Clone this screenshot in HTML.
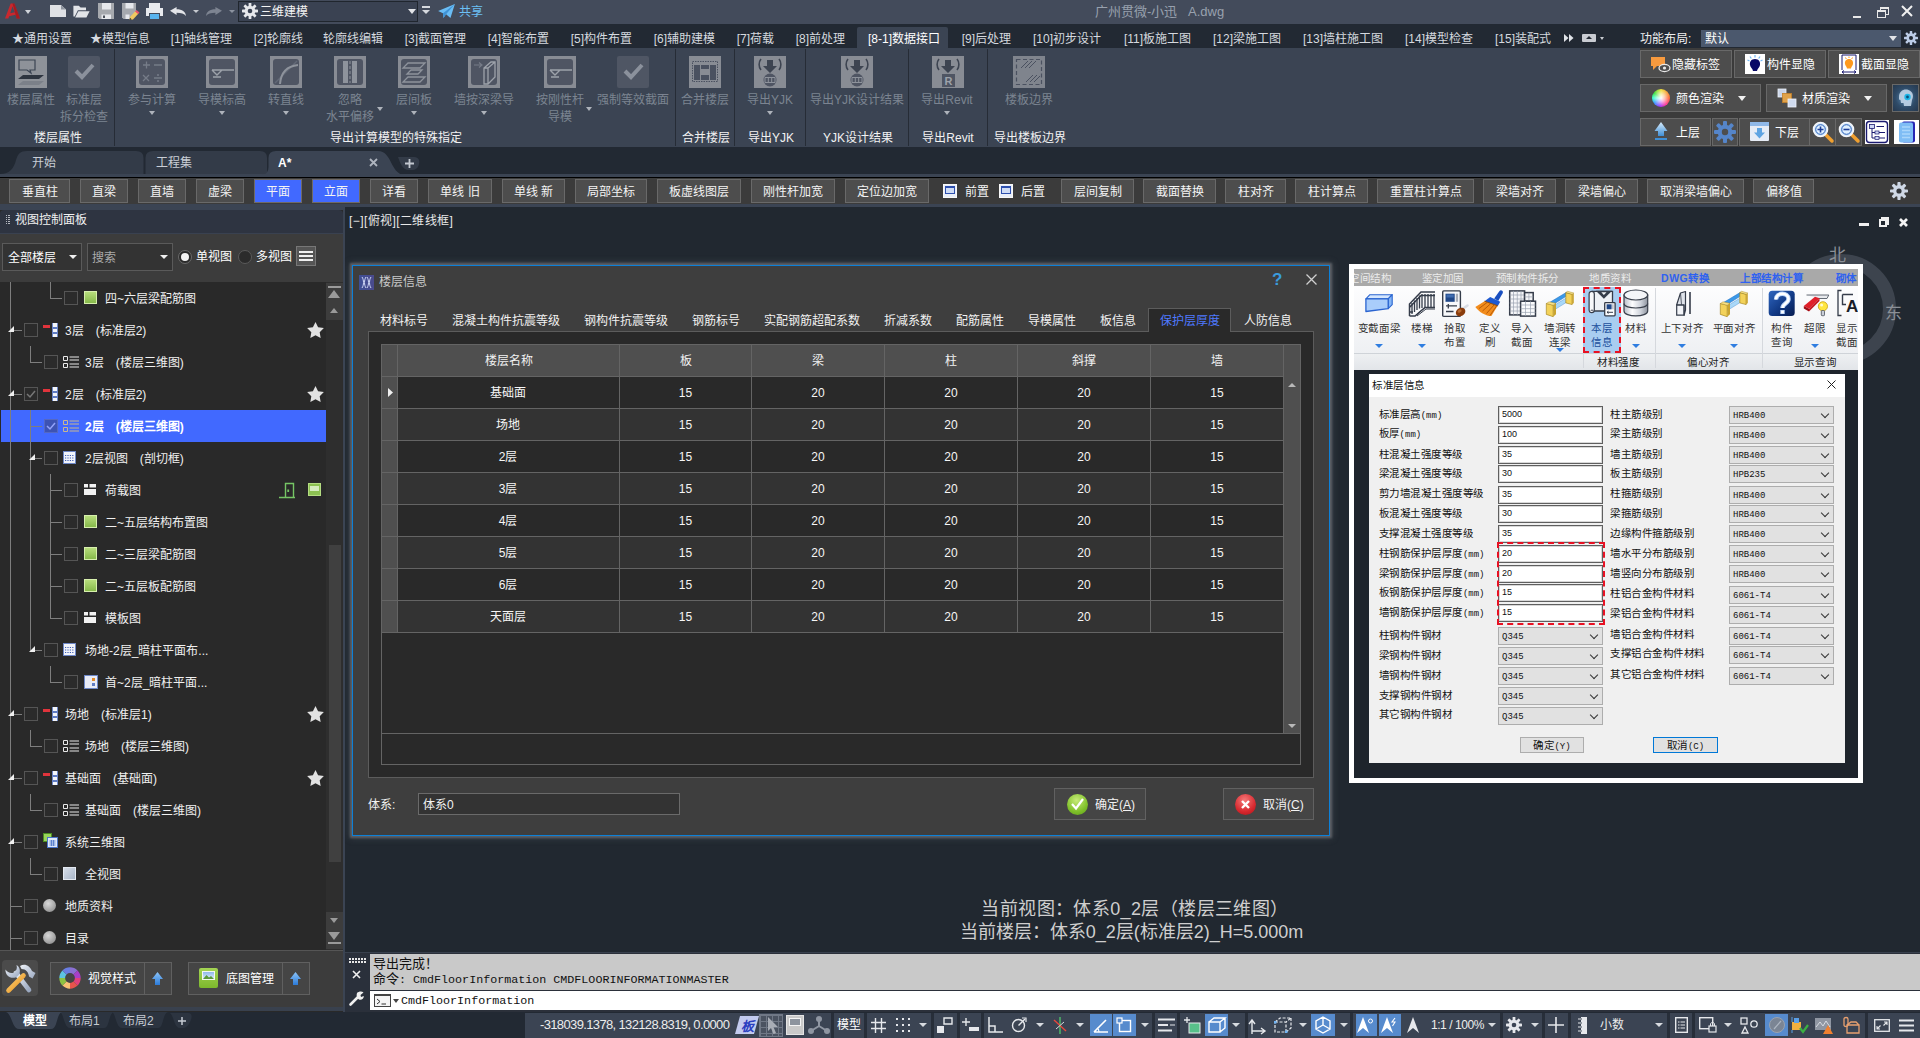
<!DOCTYPE html>
<html lang="zh-CN">
<head>
<meta charset="utf-8">
<title>楼层信息</title>
<style>
*{box-sizing:border-box;margin:0;padding:0}
html,body{width:1920px;height:1038px;overflow:hidden;background:#212830}
body{font-family:"Liberation Sans",sans-serif;font-size:12px;color:#e6e6e6;position:relative;line-height:1}
.abs{position:absolute}
.t{position:absolute;white-space:nowrap;line-height:16px;height:16px}
.c{transform:translateX(-50%)}
svg{position:absolute;overflow:visible}
/* title bar */
#title{position:absolute;left:0;top:0;width:1920px;height:24px;background:#434b5b}
#tabs{position:absolute;left:0;top:24px;width:1920px;height:26px;background:#222933}
#tabs .t{top:7px;font-size:12px;color:#d5d9df}
#ribbon{position:absolute;left:0;top:50px;width:1920px;height:97px;background:#3b4453}
#ribbon .ic{position:absolute;top:6px;width:32px;height:32px;background:#888c94}
#ribbon .lb{position:absolute;top:42px;font-size:12px;color:#7c8491;white-space:nowrap;line-height:17px;text-align:center;transform:translateX(-50%)}
#ribbon .pl{position:absolute;top:80px;margin-left:1px;font-size:12px;color:#f2f2f2;white-space:nowrap;line-height:16px;transform:translateX(-50%)}
#ribbon .sep{position:absolute;top:-1px;width:1px;height:97px;background:#262c36}
#ribbon .dd{position:absolute;width:0;height:0;border:3px solid transparent;border-top:4px solid #aeb3bb;border-bottom:0}
.rb{position:absolute;background:#4d4d4d;border:1px solid #686868;color:#f0f0f0;font-size:12px}
#doctabs{position:absolute;left:0;top:147px;width:1920px;height:31px;background:#222933}
#toolbar{position:absolute;left:0;top:178px;width:1920px;height:30px;background:#3b3b3b}
#toolbar .b{position:absolute;top:1px;height:24px;background:#4d4d4d;border:1px solid #696969;margin-left:-1px;box-sizing:content-box;height:21px;padding-top:1px;color:#f4f4f4;font-size:12px;text-align:center;line-height:23px;white-space:nowrap}
#toolbar .b.on{background:#4169ff;border-color:#6f6a66}
#left{position:absolute;left:0;top:208px;width:344px;height:804px;background:#292929}
#tree .r{position:absolute;left:0;width:326px;height:32px}
#tree .cb{position:absolute;top:9px;width:14px;height:14px;border:1px solid #555;background:#2b2b2b}
#tree .tx{position:absolute;top:9px;font-size:12px;color:#f0f0f0;white-space:nowrap;line-height:16px}
#tree .ln{position:absolute;background:#7e7e7e}
#dlg{position:absolute;left:352px;top:265px;width:978px;height:571px;background:#3e3e3e;border:1px solid #0c80d8;box-shadow:0 0 2px 2px rgba(100,103,108,.82),0 0 7px 2px rgba(108,114,122,.4)}
#dlg .tab{position:absolute;top:48px;font-size:12px;color:#f0f0f0;white-space:nowrap;line-height:16px}
#grid td{border-right:1px solid #5a5a5a;border-bottom:1px solid #5a5a5a;text-align:center;font-size:12px;color:#f4f4f4;height:32px;padding:0}
#img{position:absolute;left:1349px;top:264px;width:514px;height:519px;background:#fff;border-radius:3px}
#img .fl{position:absolute;left:9px;font-size:10px;color:#111;white-space:nowrap;line-height:14px}
#img .fr{position:absolute;left:241px;font-size:10px;color:#111;white-space:nowrap;line-height:14px}
#img .in{position:absolute;left:149px;width:105px;height:18px;background:#fff;border:1px solid #5f5f5f;box-shadow:inset 0 0 0 1px #d8d8d8;font-size:9px;color:#111;line-height:15px;padding-left:3px}
#img .se{position:absolute;width:105px;height:18px;background:#e1e1e1;border:1px solid #adadad;font-size:9px;color:#111;line-height:18px;padding-left:3px;font-family:"Liberation Mono",monospace}
#img .se:after{content:"";position:absolute;right:5px;top:4px;width:5px;height:5px;border-right:1px solid #333;border-bottom:1px solid #333;transform:rotate(45deg)}
#cmd{position:absolute;left:345px;top:953px;width:1575px;height:59px;background:#2b303a}
#status{position:absolute;left:0;top:1012px;width:1920px;height:26px;background:#222933}
</style>
</head>
<body>
<div id="title">
  <!-- A logo -->
  <svg style="left:5px;top:3px" width="15" height="16" viewBox="0 0 20 20"><path d="M0 20 L7.500 0 L12.500 0 L20 20 L15.500 20 L14 15 L5.500 17 L4.500 20 Z M7 13 L13 11.800 L10 3.500 Z" fill="#c9282e"/><path d="M10 0 H12.500 L20 20 H15.500 Z" fill="#8e1218" opacity=".6"/></svg>
  <div class="abs" style="left:25px;top:10px;border:3.5px solid transparent;border-top:4px solid #d0d4da;border-bottom:0"></div>
  <!-- new -->
  <svg style="left:50px;top:5px" width="16" height="12" viewBox="0 0 16 12"><path d="M0 0 H11 L16 4.500 V12 H0 Z" fill="#dfe1e5"/><path d="M11 0 V4.500 H16 Z" fill="#8f959f"/></svg>
  <!-- open -->
  <svg style="left:73px;top:4px" width="17" height="13.500" viewBox="0 0 18 15"><path d="M0 2 H6 L8 4 H14 V7 H5 L1.5 14 H0 Z" fill="#e2e4e8"/><path d="M5.5 8 H18 L14.5 15 H2 Z" fill="#e2e4e8"/></svg>
  <!-- save -->
  <svg style="left:98px;top:3px" width="16" height="16" viewBox="0 0 16 16"><path d="M0 0 H16 V16 H1.500 L0 14.500 Z" fill="#a6a9ae"/><rect x="4" y="0" width="9" height="6.500" fill="#e6e8ec"/><rect x="3.500" y="11.500" width="9.500" height="4.500" fill="#e6e8ec"/><rect x="5" y="12.500" width="2" height="2.500" fill="#4a505a"/></svg>
  <!-- save as -->
  <svg style="left:122px;top:3px" width="17" height="16" viewBox="0 0 17 16"><path d="M0 0 H14 V9 L8 16 H1.500 L0 14.500 Z" fill="#a6a9ae"/><rect x="3.500" y="0" width="8" height="5.500" fill="#e6e8ec"/><rect x="3.500" y="11.500" width="4" height="4.500" fill="#e6e8ec"/><path d="M8 14 L13.500 8 L16.500 10.500 L11 16.500 L7.500 17 Z" fill="#f0c860"/><path d="M13 8.500 L14.500 7 L17.500 9.500 L16 11 Z" fill="#e8506a"/><path d="M7.500 17 L8 14.800 L9.800 16.500 Z" fill="#333"/></svg>
  <!-- print -->
  <svg style="left:146px;top:3px" width="17" height="17" viewBox="0 0 17 17"><rect x="3" y="0" width="11" height="5" fill="#e8eaee"/><rect x="0" y="5" width="17" height="8" fill="#e8eaee"/><rect x="3" y="10" width="11" height="7" fill="#434b5b"/><rect x="4" y="11" width="9" height="5" fill="#59b4ef"/></svg>
  <!-- undo -->
  <svg style="left:170px;top:7px" width="16" height="9" viewBox="0 0 17 12" preserveAspectRatio="none"><path d="M0 5 L7 0 V3 C13 3 16.5 6 17 12 C15 8.5 12 7.5 7 7.5 V10.5 Z" fill="#e2e4e8"/></svg>
  <div class="abs" style="left:193px;top:10px;border:3px solid transparent;border-top:3.5px solid #c5c9cf;border-bottom:0"></div>
  <!-- redo -->
  <svg style="left:206px;top:7px" width="16" height="9" viewBox="0 0 17 12" preserveAspectRatio="none"><path d="M17 5 L10 0 V3 C4 3 .5 6 0 12 C2 8.5 5 7.5 10 7.5 V10.5 Z" fill="#7d8491"/></svg>
  <div class="abs" style="left:229px;top:10px;border:3px solid transparent;border-top:3.5px solid #8c93a0;border-bottom:0"></div>
  <!-- workspace dropdown -->
  <div class="abs" style="left:238px;top:1px;width:180px;height:21px;background:#3a4252;border:1px solid #20262e"></div>
  <svg style="left:242px;top:3px" width="16" height="16" viewBox="0 0 16 16"><g fill="#e6e8ec"><circle cx="8" cy="8" r="5.3"/><g id="gt"><rect x="6.6" y="0" width="2.8" height="16" rx=".6"/></g><rect x="6.6" y="0" width="2.8" height="16" rx=".6" transform="rotate(45 8 8)"/><rect x="6.6" y="0" width="2.8" height="16" rx=".6" transform="rotate(90 8 8)"/><rect x="6.6" y="0" width="2.8" height="16" rx=".6" transform="rotate(135 8 8)"/></g><circle cx="8" cy="8" r="2.3" fill="#3a4252"/></svg>
  <div class="t" style="left:260px;top:4px;font-size:12px;color:#f4f4f4">三维建模</div>
  <div class="abs" style="left:408px;top:9px;border:4px solid transparent;border-top:5px solid #e2e4e8;border-bottom:0"></div>
  <div class="abs" style="left:422px;top:6px;width:8px;height:2px;background:#d6d9de"></div>
  <div class="abs" style="left:422px;top:10px;border:4px solid transparent;border-top:4px solid #d6d9de;border-bottom:0"></div>
  <!-- share -->
  <svg style="left:438px;top:4px" width="17" height="15" viewBox="0 0 19 17"><path d="M0 8 L19 0 L14 16 L9 11.5 L6 16 L5.5 10.5 Z" fill="#6abdf5"/><path d="M5.5 10.5 L19 0 L9 11.5 L6 16 Z" fill="#3f93d6"/></svg>
  <div class="t" style="left:459px;top:4px;font-size:12px;color:#6cc0f5">共享</div>
  <div class="t" style="left:1095px;top:4px;font-size:13px;color:#98a1ae">广州贯微-小迅</div>
  <div class="t" style="left:1188px;top:4px;font-size:13px;color:#98a1ae">A.dwg</div>
  <!-- window controls -->
  <div class="abs" style="left:1853px;top:16px;width:8px;height:2px;background:#e8e8e8"></div>
  <div class="abs" style="left:1880px;top:7px;width:9px;height:8px;border:1.5px solid #e8e8e8;border-top-width:2px"></div>
  <div class="abs" style="left:1877px;top:10px;width:9px;height:8px;border:1.5px solid #e8e8e8;border-top-width:2px;background:#434b5b"></div>
  <svg style="left:1901px;top:5px" width="12" height="12" viewBox="0 0 12 12"><path d="M1 1 L11 11 M11 1 L1 11" stroke="#f0f0f0" stroke-width="2"/></svg>
</div>
<div id="tabs">
  <div class="abs" style="left:0;top:24px;width:1920px;height:2px;background:#3b4453"></div>
  <div class="abs" style="left:857px;top:3px;width:91px;height:23px;background:#3b4453;border-radius:2px 2px 0 0"></div>
  <div class="t" style="left:12px">★通用设置</div>
  <div class="t" style="left:90px">★模型信息</div>
  <div class="t" style="right:1688px">[1]轴线管理</div>
  <div class="t" style="right:1617px">[2]轮廓线</div>
  <div class="t" style="left:323px">轮廓线编辑</div>
  <div class="t" style="right:1454px">[3]截面管理</div>
  <div class="t" style="right:1371px">[4]智能布置</div>
  <div class="t" style="right:1288px">[5]构件布置</div>
  <div class="t" style="right:1205px">[6]辅助建模</div>
  <div class="t" style="right:1146px">[7]荷载</div>
  <div class="t" style="right:1075px">[8]前处理</div>
  <div class="t" style="right:980px;color:#fff">[8-1]数据接口</div>
  <div class="t" style="right:909px">[9]后处理</div>
  <div class="t" style="right:819px">[10]初步设计</div>
  <div class="t" style="right:729px">[11]板施工图</div>
  <div class="t" style="right:639px">[12]梁施工图</div>
  <div class="t" style="right:537px">[13]墙柱施工图</div>
  <div class="t" style="right:447px">[14]模型检查</div>
  <div class="t" style="right:369px">[15]装配式</div>
  <svg style="left:1564px;top:10px" width="10" height="8" viewBox="0 0 10 8"><path d="M0 0 L4.5 4 L0 8 Z M5 0 L9.5 4 L5 8 Z" fill="#e0e3e8"/></svg>
  <div class="abs" style="left:1582px;top:10px;width:14px;height:8px;background:#c9ccd2;border-radius:1px"></div>
  <div class="abs" style="left:1586px;top:12px;border:3px solid transparent;border-bottom:3.5px solid #222933;border-top:0"></div>
  <div class="abs" style="left:1600px;top:13px;border:2.5px solid transparent;border-top:3px solid #c9ccd2;border-bottom:0"></div>
  <div class="t" style="left:1640px;color:#eee">功能布局:</div>
  <div class="abs" style="left:1701px;top:6px;width:200px;height:17px;background:#4b586d"></div>
  <div class="t" style="left:1705px;top:7px;color:#fff">默认</div>
  <div class="abs" style="left:1889px;top:12px;border:4px solid transparent;border-top:5px solid #e2e4e8;border-bottom:0"></div>
  <svg style="left:1904px;top:7px" width="14" height="14" viewBox="0 0 16 16"><g fill="#bccce6"><circle cx="8" cy="8" r="5.3"/><rect x="6.6" y="0" width="2.8" height="16" rx=".6"/><rect x="6.6" y="0" width="2.8" height="16" rx=".6" transform="rotate(45 8 8)"/><rect x="6.6" y="0" width="2.8" height="16" rx=".6" transform="rotate(90 8 8)"/><rect x="6.6" y="0" width="2.8" height="16" rx=".6" transform="rotate(135 8 8)"/></g><circle cx="8" cy="8" r="2.3" fill="#222933"/></svg>
</div>
<div id="ribbon">
  
  <!-- separators -->
  <div class="sep" style="left:114px"></div><div class="sep" style="left:675px"></div><div class="sep" style="left:734px"></div><div class="sep" style="left:805px"></div><div class="sep" style="left:908px"></div><div class="sep" style="left:987px"></div>
  <!-- 1 楼层属性 -->
  <div class="ic" style="left:15px;background:#8e9299"><svg width="32" height="32" viewBox="0 0 32 32" style="left:0;top:0"><path d="M4 4 H20 V14 H15 L16 17 L12 14 H4 Z" fill="none" stroke="#3b4453" stroke-width="1.2"/><path d="M8 19 H29 L24 23 H3 Z" fill="#2e3540"/><path d="M8 25 H29 L24 29 H3 Z" fill="#7b8089"/></svg></div>
  <div class="lb" style="left:31px">楼层属性</div>
  <!-- 2 标准层拆分检查 -->
  <div class="ic" style="left:68px;background:#4f5664;border-radius:2px"><svg width="32" height="32" viewBox="0 0 32 32" style="left:0;top:0"><path d="M8 15 L14 21 L25 9" fill="none" stroke="#8b919c" stroke-width="4"/></svg></div>
  <div class="lb" style="left:84px">标准层<br>拆分检查</div>
  <!-- 3 参与计算 -->
  <div class="ic" style="left:136px"><svg width="32" height="32" viewBox="0 0 32 32" style="left:0;top:0"><rect x="3" y="3" width="26" height="26" rx="3" fill="#4f5563"/><path d="M7 9 H14 M10.5 5.5 V12.5 M18 9 H26 M7 19 L13 25 M13 19 L7 25 M18 22 H26" stroke="#767c88" stroke-width="1.3" fill="none"/><circle cx="22" cy="19" r="1" fill="#767c88"/><circle cx="22" cy="25" r="1" fill="#767c88"/></svg></div>
  <div class="lb" style="left:152px">参与计算</div><div class="dd" style="left:149px;top:61px"></div>
  <!-- 4 导模标高 -->
  <div class="ic" style="left:206px"><svg width="32" height="32" viewBox="0 0 32 32" style="left:0;top:0"><rect x="3" y="3" width="26" height="26" rx="3" fill="#4f5563"/><path d="M6 14 H28 M6 14 L11 19 L16 14 M7 21 H15" stroke="#9da2aa" stroke-width="1.4" fill="none"/></svg></div>
  <div class="lb" style="left:222px">导模标高</div><div class="dd" style="left:219px;top:61px"></div>
  <!-- 5 转直线 -->
  <div class="ic" style="left:270px"><svg width="32" height="32" viewBox="0 0 32 32" style="left:0;top:0"><rect x="3" y="3" width="26" height="26" rx="3" fill="#4f5563"/><path d="M5 27 L27 5" stroke="#626977" stroke-width="1.5"/><path d="M10 28 C11 16 18 10 28 9" stroke="#8e939c" stroke-width="2" fill="none"/></svg></div>
  <div class="lb" style="left:286px">转直线</div><div class="dd" style="left:283px;top:61px"></div>
  <!-- 6 忽略水平偏移 -->
  <div class="ic" style="left:334px"><svg width="32" height="32" viewBox="0 0 32 32" style="left:0;top:0"><rect x="3" y="3" width="26" height="26" rx="3" fill="#4f5563"/><rect x="9" y="5" width="5" height="22" fill="#8e939c"/><rect x="18" y="5" width="5" height="22" fill="#8e939c"/><path d="M16 5 V27" stroke="#8e939c" stroke-width="1" stroke-dasharray="3 2"/></svg></div>
  <div class="lb" style="left:350px">忽略<br>水平偏移</div><div class="dd" style="left:377px;top:57px"></div>
  <!-- 7 层间板 -->
  <div class="ic" style="left:398px"><svg width="32" height="32" viewBox="0 0 32 32" style="left:0;top:0"><rect x="3" y="3" width="26" height="26" rx="3" fill="#4f5563"/><path d="M10 7 H27 L22 12 H5 Z M13 14 H24 L20 18 H9 Z M10 21 H27 L22 26 H5 Z" fill="none" stroke="#8e939c" stroke-width="1.3"/></svg></div>
  <div class="lb" style="left:414px">层间板</div><div class="dd" style="left:411px;top:61px"></div>
  <!-- 8 墙按深梁导 -->
  <div class="ic" style="left:468px"><svg width="32" height="32" viewBox="0 0 32 32" style="left:0;top:0"><rect x="3" y="3" width="26" height="26" rx="3" fill="#4f5563"/><path d="M6 9 H14 M11 6.5 L14 9 L11 11.5" stroke="#767c88" stroke-width="1.2" fill="none"/><path d="M16 12 L23 6 H27 V21 L20 28 H16 Z M20 12 V28 M20 12 L27 6 M16 12 H20" fill="none" stroke="#9da2aa" stroke-width="1.3"/></svg></div>
  <div class="lb" style="left:484px">墙按深梁导</div><div class="dd" style="left:481px;top:61px"></div>
  <!-- 9 按刚性杆导模 -->
  <div class="ic" style="left:544px"><svg width="32" height="32" viewBox="0 0 32 32" style="left:0;top:0"><rect x="3" y="3" width="26" height="26" rx="3" fill="#4f5563"/><path d="M6 14 H28 M6 14 L11 19 L16 14 M7 21 H15" stroke="#9da2aa" stroke-width="1.4" fill="none"/></svg></div>
  <div class="lb" style="left:560px">按刚性杆<br>导模</div><div class="dd" style="left:586px;top:57px"></div>
  <!-- 10 强制等效截面 -->
  <div class="ic" style="left:617px;background:#4f5664;border-radius:2px"><svg width="32" height="32" viewBox="0 0 32 32" style="left:0;top:0"><path d="M8 15 L14 21 L25 9" fill="none" stroke="#8b919c" stroke-width="4"/></svg></div>
  <div class="lb" style="left:633px">强制等效截面</div>
  <!-- 11 合并楼层 -->
  <div class="ic" style="left:689px"><svg width="32" height="32" viewBox="0 0 32 32" style="left:0;top:0"><rect x="3.5" y="5.5" width="25" height="20" fill="none" stroke="#4a5160" stroke-width="1" stroke-dasharray="1.5 1"/><rect x="5" y="9" width="6" height="15" fill="#4a5160"/><rect x="12" y="9" width="8" height="4" fill="#4a5160"/><rect x="12" y="19" width="8" height="5" fill="#4a5160"/><rect x="21" y="9" width="6" height="15" fill="#4a5160"/></svg></div>
  <div class="lb" style="left:705px">合并楼层</div>
  <!-- 12 导出YJK -->
  <div class="ic" style="left:754px"><svg width="32" height="32" viewBox="0 0 32 32" style="left:0;top:0"><path d="M7 3 C4.5 6 4.5 11 7 14 M25 3 C27.5 6 27.5 11 25 14" fill="none" stroke="#3d4451" stroke-width="1.6"/><path d="M13 4 H19 V10 H23 L16 17 L9 10 H13 Z" fill="#3d4451"/><circle cx="16" cy="24" r="6.5" fill="#4f5563"/><path d="M11 21.5 H21 V26.5 H11 Z M14.3 21.5 V26.5 M17.7 21.5 V26.5" fill="none" stroke="#8e939c" stroke-width="1"/></svg></div>
  <div class="lb" style="left:770px">导出YJK</div><div class="dd" style="left:767px;top:61px"></div>
  <!-- 13 导出YJK设计结果 -->
  <div class="ic" style="left:841px"><svg width="32" height="32" viewBox="0 0 32 32" style="left:0;top:0"><path d="M7 3 C4.5 6 4.5 11 7 14 M25 3 C27.5 6 27.5 11 25 14" fill="none" stroke="#3d4451" stroke-width="1.6"/><path d="M13 4 H19 V10 H23 L16 17 L9 10 H13 Z" fill="#3d4451"/><circle cx="16" cy="24" r="6.5" fill="#4f5563"/><path d="M11 21.5 H21 V26.5 H11 Z M14.3 21.5 V26.5 M17.7 21.5 V26.5" fill="none" stroke="#8e939c" stroke-width="1"/></svg></div>
  <div class="lb" style="left:857px">导出YJK设计结果</div>
  <!-- 14 导出Revit -->
  <div class="ic" style="left:932px"><svg width="32" height="32" viewBox="0 0 32 32" style="left:0;top:0"><path d="M7 3 C4.5 6 4.5 11 7 14 M25 3 C27.5 6 27.5 11 25 14" fill="none" stroke="#3d4451" stroke-width="1.6"/><path d="M13 4 H19 V10 H23 L16 17 L9 10 H13 Z" fill="#3d4451"/><rect x="10" y="18" width="13" height="13" fill="#4f5563"/><text x="16.5" y="29" font-family="Liberation Sans" font-size="11" font-weight="bold" text-anchor="middle" fill="#9da2aa">R</text></svg></div>
  <div class="lb" style="left:947px">导出Revit</div><div class="dd" style="left:944px;top:61px"></div>
  <!-- 15 楼板边界 -->
  <div class="ic" style="left:1013px;background:#7f848d"><svg width="32" height="32" viewBox="0 0 32 32" style="left:0;top:0"><rect x="3.5" y="3.5" width="25" height="25" fill="none" stroke="#4a5160" stroke-width="1.2" stroke-dasharray="4 2.5"/><path d="M8 12 L15 5 M12 12 L19 5 M16 12 L23 5 M13 26 L20 19 M17 26 L24 19 M21 26 L27 20" stroke="#4a5160" stroke-width="1"/></svg></div>
  <div class="lb" style="left:1029px">楼板边界</div>
  <!-- panel labels -->
  <div class="pl" style="left:57px">楼层属性</div>
  <div class="pl" style="left:395px">导出计算模型的特殊指定</div>
  <div class="pl" style="left:705px">合并楼层</div>
  <div class="pl" style="left:770px">导出YJK</div>
  <div class="pl" style="left:857px">YJK设计结果</div>
  <div class="pl" style="left:947px">导出Revit</div>
  <div class="pl" style="left:1029px">导出楼板边界</div>
</div>
<div class="abs" style="left:1640px;top:48px;width:280px;height:99px;background:#3b3b3b"></div>
<!-- row1 -->
<div class="rb" style="left:1640px;top:50px;width:92px;height:28px"></div>
<svg style="left:1651px;top:57px" width="20" height="16" viewBox="0 0 20 16"><path d="M0 0 H14 V9 H6 L2 13 V9 H0 Z" fill="#f79a3e"/><ellipse cx="13.5" cy="11" rx="5.5" ry="3.6" fill="#4d4d4d" stroke="#e8e8e8" stroke-width="1.3"/><circle cx="13.5" cy="11" r="1.6" fill="#e8e8e8"/></svg>
<div class="t" style="left:1672px;top:57px;color:#fff">隐藏标签</div>
<div class="rb" style="left:1734px;top:50px;width:92px;height:28px"></div>
<div class="abs" style="left:1745px;top:54px;width:20px;height:20px;background:#fff"></div>
<svg style="left:1745px;top:54px" width="20" height="20" viewBox="0 0 20 20"><path d="M10 5 C14 5 15.5 8 15 11 C14.5 13.5 12.5 14.5 12 17 H8 C7.5 14.5 5.500 13.5 5 11 C4.500 8 6 5 10 5 Z" fill="#0a0a66"/><path d="M10 1 V3.500 M5 2.500 L6.300 4.500 M15 2.500 L13.700 4.500 M2.500 6 L4.500 7 M17.500 6 L15.500 7" stroke="#6fb7f5" stroke-width="1.2"/></svg>
<div class="t" style="left:1767px;top:57px;color:#fff">构件显隐</div>
<div class="rb" style="left:1828px;top:50px;width:92px;height:28px"></div>
<div class="abs" style="left:1839px;top:54px;width:20px;height:20px;background:#fff"></div>
<svg style="left:1839px;top:54px" width="20" height="20" viewBox="0 0 20 20"><path d="M3 1 H17 V16 M3 1 V16" fill="none" stroke="#1a1a70" stroke-width="1"/><path d="M10 5 C13 5 14.5 7.500 14 10 C13.600 12 12.300 12.500 12 14.500 H8 C7.700 12.500 6.400 12 6 10 C5.500 7.500 7 5 10 5 Z" fill="#ff9a1e"/><path d="M10 2.500 V4 M6.500 3.500 L7.300 5 M13.500 3.500 L12.700 5" stroke="#ff9a1e" stroke-width="1"/><path d="M3 18 H17 M3 18 L5 16.500 M3 18 L5 19.500 M17 18 L15 16.500 M17 18 L15 19.500" stroke="#1a1a70" stroke-width="1" fill="none"/></svg>
<div class="t" style="left:1861px;top:57px;color:#fff">截面显隐</div>
<!-- row2 -->
<div class="rb" style="left:1640px;top:84px;width:121px;height:28px"></div>
<div class="abs" style="left:1652px;top:89px;width:18px;height:18px;border-radius:50%;background:radial-gradient(circle at 50% 50%,#fff 0,rgba(255,255,255,.6) 30%,rgba(255,255,255,0) 65%),conic-gradient(#f0e040,#ff6a3b 25%,#ff3b9a 40%,#a03bff 52%,#3b9bff 65%,#3bffd0 75%,#40e040 85%,#f0e040)"></div>
<div class="t" style="left:1676px;top:91px;color:#fff">颜色渲染</div>
<div class="abs" style="left:1738px;top:96px;border:4px solid transparent;border-top:5px solid #f0f0f0;border-bottom:0"></div>
<div class="rb" style="left:1766px;top:84px;width:121px;height:28px"></div>
<svg style="left:1778px;top:89px" width="18" height="18" viewBox="0 0 18 18"><rect x="0" y="0" width="8" height="8" fill="#c9d4e8" stroke="#eef2fa" stroke-width=".8"/><rect x="4.500" y="4.500" width="9" height="9" fill="#e0a24a" stroke="#c4812a" stroke-width=".8"/><rect x="10" y="10" width="8" height="8" fill="#d0dbee" stroke="#eef2fa" stroke-width=".8"/></svg>
<div class="t" style="left:1802px;top:91px;color:#fff">材质渲染</div>
<div class="abs" style="left:1864px;top:96px;border:4px solid transparent;border-top:5px solid #f0f0f0;border-bottom:0"></div>
<div class="rb" style="left:1892px;top:84px;width:27px;height:28px;background:radial-gradient(circle at 50% 50%,#5d8eb5 0,#2f4b68 55%,#25384e 100%)"></div>
<svg style="left:1895px;top:87px" width="22" height="22" viewBox="0 0 22 22"><path d="M4 10 C4 4 9 1.500 13.500 3 C18 4.500 19 9 17 13 L16 19 H9 L8.500 16 H6 L5.500 13 L4 12.500 Z" fill="#c9dcee" opacity=".85"/><circle cx="12.500" cy="10" r="3.200" fill="#1fb6e8"/><circle cx="12.500" cy="10" r="1.400" fill="#0b4f7a"/></svg>
<!-- row3 -->
<div class="rb" style="left:1640px;top:118px;width:71px;height:28px"></div>
<svg style="left:1654px;top:122px" width="14" height="19" viewBox="0 0 14 19"><defs><linearGradient id="ga" x1="0" y1="0" x2="0" y2="1"><stop offset="0" stop-color="#d8ecfb"/><stop offset="1" stop-color="#3f8fd6"/></linearGradient></defs><path d="M7 0 L13.500 9 H10 V14 H4 V9 H.5 Z" fill="url(#ga)"/><rect x="1" y="16" width="12" height="2" fill="#3f8fd6"/></svg>
<div class="t" style="left:1676px;top:125px;color:#fff">上层</div>
<div class="rb" style="left:1712px;top:118px;width:26px;height:28px"></div>
<svg style="left:1714px;top:121px" width="22" height="22" viewBox="0 0 22 22"><g fill="#5585c9"><circle cx="11" cy="11" r="7.300"/><rect x="9" y="0" width="4" height="22" rx="1"/><rect x="9" y="0" width="4" height="22" rx="1" transform="rotate(45 11 11)"/><rect x="9" y="0" width="4" height="22" rx="1" transform="rotate(90 11 11)"/><rect x="9" y="0" width="4" height="22" rx="1" transform="rotate(135 11 11)"/></g><circle cx="11" cy="11" r="3.200" fill="#4d4d4d"/></svg>
<div class="rb" style="left:1739px;top:118px;width:71px;height:28px"></div>
<svg style="left:1750px;top:122px" width="19" height="19" viewBox="0 0 19 19"><rect x="0" y="0" width="19" height="19" rx="1" fill="#e6ecf6"/><rect x="0" y="0" width="19" height="4" fill="#8fb8e8"/><path d="M7 6 H12 V10.500 H15 L9.500 16.500 L4 10.500 H7 Z" fill="#5fa4e2"/></svg>
<div class="t" style="left:1775px;top:125px;color:#fff">下层</div>
<div class="rb" style="left:1809px;top:118px;width:27px;height:28px"></div>
<svg style="left:1812px;top:121px" width="23" height="23" viewBox="0 0 23 23"><path d="M13 13 L20 20" stroke="#f0a030" stroke-width="3.500" stroke-linecap="round"/><circle cx="8.500" cy="8.500" r="7" fill="#cfe6fa" stroke="#f4f6fa" stroke-width="1.600"/><circle cx="8.500" cy="8.500" r="4.800" fill="#dff0ff" stroke="#2a5fb8" stroke-width="1"/><path d="M5.500 8.500 H11.500 M8.500 5.500 V11.500" stroke="#1d3f9a" stroke-width="1.600"/></svg>
<div class="rb" style="left:1835px;top:118px;width:27px;height:28px"></div>
<svg style="left:1838px;top:121px" width="23" height="23" viewBox="0 0 23 23"><path d="M13 13 L20 20" stroke="#f0a030" stroke-width="3.500" stroke-linecap="round"/><circle cx="8.500" cy="8.500" r="7" fill="#cfe6fa" stroke="#f4f6fa" stroke-width="1.600"/><circle cx="8.500" cy="8.500" r="4.800" fill="#dff0ff" stroke="#2a5fb8" stroke-width="1"/><path d="M5.500 8.500 H11.500" stroke="#1d3f9a" stroke-width="1.600"/></svg>
<div class="abs" style="left:1865px;top:120px;width:24px;height:24px;background:#fff"></div>
<svg style="left:1865px;top:120px" width="24" height="24" viewBox="0 0 24 24"><rect x="1.500" y="1.500" width="21" height="21" rx="3" fill="#fff" stroke="#1a1a70" stroke-width="1.400"/><rect x="4.500" y="4.500" width="5" height="4" fill="#cfd8f5" stroke="#1a1a70" stroke-width=".8"/><path d="M11.500 6.500 H19 M7 8.500 V18 M7 12.500 H10 M7 18 H10 M14 12.500 H20 M14 18 H20" stroke="#1a1a70" stroke-width="1" fill="none"/><rect x="10" y="11" width="4" height="3" fill="#cfd8f5" stroke="#1a1a70" stroke-width=".7"/><rect x="10" y="16.500" width="4" height="3" fill="#cfd8f5" stroke="#1a1a70" stroke-width=".7"/></svg>
<div class="abs" style="left:1894px;top:120px;width:25px;height:24px;background:#fff"></div>
<svg style="left:1894px;top:120px" width="25" height="24" viewBox="0 0 25 24"><rect x="8" y="1.500" width="13" height="21" rx="2" fill="#2727b5"/><rect x="5" y="2.500" width="14" height="20" rx="2" fill="#7fbdf5"/><path d="M8 7 H16 M8 10.500 H16 M8 14 H16 M8 17.500 H16" stroke="#aad6fb" stroke-width="1.300"/></svg>
<div id="doctabs">
  <div class="abs" style="left:0;top:26.500px;width:1920px;height:3px;background:#3b4453"></div>
  <div class="abs" style="left:0;top:29.500px;width:1920px;height:1.500px;background:#000"></div>
  <svg style="left:0;top:3.500px" width="430" height="24" viewBox="0 0 430 24">
    <path d="M0 23 C10 23 14 17 16 9 C18 3 20 0 27 0 H136 Q143.500 0 143.500 7 V23 Z" fill="#333b48"/>
    <path d="M145.500 23 V7 Q145.500 0 153 0 H260 Q267 0 267 7 V23 Z" fill="#333b48"/>
    <path d="M262 24 Q268.500 23 268.500 16 V7 Q268.500 0 276 0 H378 C392 0 390 22 404 24 Z" fill="#3b4453"/>
    <path d="M398 6 H414 C419 6 420 10 419 13 C418 17 416 19 411 19 H409 C402 19 400 11 398 6 Z" fill="#333b48"/>
  </svg>
  <div class="t" style="left:32px;top:8px;font-size:12px;color:#c9ced6">开始</div>
  <div class="t" style="left:156px;top:8px;font-size:12px;color:#c9ced6">工程集</div>
  <div class="t" style="left:278px;top:8px;font-size:12px;color:#fff;font-weight:bold">A*</div>
  <svg style="left:369px;top:11px" width="9" height="9" viewBox="0 0 9 9"><path d="M1 1 L8 8 M8 1 L1 8" stroke="#aeb4be" stroke-width="1.800"/></svg>
  <svg style="left:404.500px;top:11.500px" width="9" height="9" viewBox="0 0 9 9"><path d="M4.500 0 V9 M0 4.500 H9" stroke="#c3c8d0" stroke-width="1.800"/></svg>
</div>
<div id="toolbar">
  <div class="abs" style="left:0;top:25.500px;width:1920px;height:4.500px;background:#3b4453"></div>
  <div class="abs" style="left:345px;top:28.500px;width:1575px;height:1.500px;background:#212830"></div>
  <div class="b" style="left:10px;width:59px">垂直柱</div>
  <div class="b" style="left:81px;width:46px">直梁</div>
  <div class="b" style="left:139px;width:46px">直墙</div>
  <div class="b" style="left:197px;width:46px">虚梁</div>
  <div class="b on" style="left:255px;width:46px">平面</div>
  <div class="b on" style="left:313px;width:46px">立面</div>
  <div class="b" style="left:371px;width:46px">详看</div>
  <div class="b" style="left:429px;width:62px">单线 旧</div>
  <div class="b" style="left:503px;width:61px">单线 新</div>
  <div class="b" style="left:576px;width:70px">局部坐标</div>
  <div class="b" style="left:658px;width:82px">板虚线图层</div>
  <div class="b" style="left:752px;width:82px">刚性杆加宽</div>
  <div class="b" style="left:846px;width:82px">定位边加宽</div>
  <div class="abs" style="left:943px;top:6px;width:14px;height:14px;background:#e9eef8;border:1px solid #f8f8f8"></div>
  <div class="abs" style="left:945px;top:8px;width:10px;height:8px;border:1.500px solid #2d4fae;border-top-width:2.500px;background:#cfdcf5"></div>
  <div class="t" style="left:965px;top:6px;color:#f4f4f4">前置</div>
  <div class="abs" style="left:999px;top:6px;width:14px;height:14px;background:#e9eef8;border:1px solid #f8f8f8"></div>
  <div class="abs" style="left:1001px;top:8px;width:10px;height:8px;border:1.500px solid #2d4fae;border-top-width:2.500px;background:#cfdcf5"></div>
  <div class="t" style="left:1021px;top:6px;color:#f4f4f4">后置</div>
  <div class="b" style="left:1062px;width:71px">层间复制</div>
  <div class="b" style="left:1144px;width:71px">截面替换</div>
  <div class="b" style="left:1226px;width:59px">柱对齐</div>
  <div class="b" style="left:1296px;width:71px">柱计算点</div>
  <div class="b" style="left:1378px;width:95px">重置柱计算点</div>
  <div class="b" style="left:1484px;width:71px">梁墙对齐</div>
  <div class="b" style="left:1566px;width:71px">梁墙偏心</div>
  <div class="b" style="left:1648px;width:95px">取消梁墙偏心</div>
  <div class="b" style="left:1754px;width:59px">偏移值</div>
  <svg style="left:1890px;top:4px" width="18" height="18" viewBox="0 0 18 18"><g fill="#cfd8e6"><circle cx="9" cy="9" r="6"/><rect x="7.400" y="0" width="3.200" height="18" rx=".8"/><rect x="7.400" y="0" width="3.200" height="18" rx=".8" transform="rotate(45 9 9)"/><rect x="7.400" y="0" width="3.200" height="18" rx=".8" transform="rotate(90 9 9)"/><rect x="7.400" y="0" width="3.200" height="18" rx=".8" transform="rotate(135 9 9)"/></g><circle cx="9" cy="9" r="2.600" fill="#33363b"/></svg>
</div>
<div id="left">
  <div class="abs" style="left:0;top:-2px;width:343px;height:4px;background:#3b4453"></div><div class="abs" style="left:0;top:1.500px;width:343px;height:23px;background:#2e3441;border-radius:4px 4px 0 0"></div><div class="abs" style="left:0;top:24.500px;width:343px;height:1.500px;background:#394150"></div>
  <div class="abs" style="left:6px;top:7px;width:4px;height:10px;background:repeating-linear-gradient(#b4b8c0 0 1px,transparent 1px 2px);-webkit-mask:linear-gradient(90deg,#000 0 1.500px,transparent 1.500px 2.500px,#000 2.500px 4px)"></div>
  <div class="t" style="left:15px;top:4px;color:#f2f2f2">视图控制面板</div>
  <div class="abs" style="left:0;top:26px;width:343px;height:48px;background:#3c3c3c"></div>
  <div class="abs" style="left:2px;top:35px;width:80px;height:28px;background:#333;border:1px solid #5a5a5a"></div>
  <div class="t" style="left:8px;top:42px;color:#fff">全部楼层</div>
  <div class="abs" style="left:69px;top:47px;border:4px solid transparent;border-top:4px solid #f0f0f0;border-bottom:0"></div>
  <div class="abs" style="left:87px;top:35px;width:86px;height:28px;background:#333;border:1px solid #5a5a5a"></div>
  <div class="t" style="left:92px;top:42px;color:#aaa">搜索</div>
  <div class="abs" style="left:160px;top:47px;border:4px solid transparent;border-top:4px solid #f0f0f0;border-bottom:0"></div>
  <div class="abs" style="left:178px;top:42px;width:14px;height:14px;border-radius:50%;border:1px solid #6a6a6a;background:#2b2b2b"></div>
  <div class="abs" style="left:181px;top:45px;width:8px;height:8px;border-radius:50%;background:#f4f4f4"></div>
  <div class="t" style="left:196px;top:41px;color:#fff">单视图</div>
  <div class="abs" style="left:238px;top:42px;width:14px;height:14px;border-radius:50%;border:1px solid #5a5a5a;background:#2b2b2b"></div>
  <div class="t" style="left:256px;top:41px;color:#fff">多视图</div>
  <div class="abs" style="left:296px;top:38px;width:20px;height:20px;background:#555;border:1px solid #777"></div>
  <div class="abs" style="left:299px;top:43px;width:14px;height:2px;background:#f0f0f0;box-shadow:0 4px 0 #f0f0f0,0 8px 0 #f0f0f0"></div>
  <div id="tree">
<div class="r" style="top:74px"><div class="cb" style="left:64px"></div><div class="abs" style="left:84px;top:9px;width:13px;height:13px;background:linear-gradient(#b7dd7c,#86b94a);border:1px solid #d7efad"></div><div class="tx" style="left:105px">四~六层梁配筋图</div></div>
<div class="r" style="top:106px"><svg style="left:8px;top:12px;z-index:2" width="6" height="6" viewBox="0 0 7 7"><path d="M7 0 V7 H0 Z" fill="#f0f0f0"/></svg><div class="cb" style="left:24px"></div><div class="abs" style="left:43px;top:11px;width:7px;height:3px;background:#e0343c"></div><div class="abs" style="left:52px;top:9px;width:6px;height:14px;background:#f4f6fb;border-left:1px solid #6d87c7;border-right:1px solid #6d87c7"></div><div class="abs" style="left:53px;top:13px;width:4px;height:2px;background:#5f7cc4"></div><div class="abs" style="left:53px;top:18px;width:4px;height:2px;background:#5f7cc4"></div><div class="tx" style="left:65px">3层<span style="margin-left:12px">(</span>标准层2)</div><svg style="left:307px;top:8px" width="17" height="16" viewBox="0 0 17 16"><path d="M8.500 0 L11.090 5.240 L16.870 6.080 L12.680 10.160 L13.670 15.920 L8.500 13.200 L3.330 15.920 L4.320 10.160 L.13 6.080 L5.910 5.240 Z" fill="#e2e2e2"/></svg></div>
<div class="r" style="top:138px"><div class="cb" style="left:44px"></div><svg style="left:63px;top:10px" width="16" height="12" viewBox="0 0 16 12"><path d="M.5 .5 H4.500 V4.500 H.5 Z M.5 7.500 H4.500 V11.500 H.5 Z" fill="none" stroke="#e8e8e8" stroke-width="1"/><path d="M6.500 1 H16 M6.500 4 H16 M6.500 8 H16 M6.500 11 H16" stroke="#e8e8e8" stroke-width="1"/></svg><div class="tx" style="left:85px">3层<span style="margin-left:12px">(</span>楼层三维图)</div></div>
<div class="r" style="top:170px"><svg style="left:8px;top:12px;z-index:2" width="6" height="6" viewBox="0 0 7 7"><path d="M7 0 V7 H0 Z" fill="#f0f0f0"/></svg><div class="cb" style="left:24px"></div><svg style="left:26px;top:12px" width="10" height="8" viewBox="0 0 10 8"><path d="M1 4 L4 7 L9 1" fill="none" stroke="#777" stroke-width="1.500"/></svg><div class="abs" style="left:43px;top:11px;width:7px;height:3px;background:#e0343c"></div><div class="abs" style="left:52px;top:9px;width:6px;height:14px;background:#f4f6fb;border-left:1px solid #6d87c7;border-right:1px solid #6d87c7"></div><div class="abs" style="left:53px;top:13px;width:4px;height:2px;background:#5f7cc4"></div><div class="abs" style="left:53px;top:18px;width:4px;height:2px;background:#5f7cc4"></div><div class="tx" style="left:65px">2层<span style="margin-left:12px">(</span>标准层2)</div><svg style="left:307px;top:8px" width="17" height="16" viewBox="0 0 17 16"><path d="M8.500 0 L11.090 5.240 L16.870 6.080 L12.680 10.160 L13.670 15.920 L8.500 13.200 L3.330 15.920 L4.320 10.160 L.13 6.080 L5.910 5.240 Z" fill="#e2e2e2"/></svg></div>
<div class="r" style="top:202px;background:#4169ff"><div class="cb" style="left:44px;background:#3d53b3;border-color:#5468c4"></div><svg style="left:46px;top:12px" width="10" height="8" viewBox="0 0 10 8"><path d="M1 4 L4 7 L9 1" fill="none" stroke="#93a3fb" stroke-width="1.500"/></svg><svg style="left:63px;top:10px" width="16" height="12" viewBox="0 0 16 12"><path d="M.5 .5 H4.500 V4.500 H.5 Z M.5 7.500 H4.500 V11.500 H.5 Z" fill="none" stroke="#c9b78e" stroke-width="1"/><path d="M6.500 1 H16 M6.500 4 H16 M6.500 8 H16 M6.500 11 H16" stroke="#c9b78e" stroke-width="1"/></svg><div class="tx" style="left:85px;font-weight:bold;color:#fff">2层<span style="margin-left:12px">(</span>楼层三维图)</div></div>
<div class="r" style="top:234px"><svg style="left:29px;top:12px;z-index:2" width="6" height="6" viewBox="0 0 7 7"><path d="M7 0 V7 H0 Z" fill="#f0f0f0"/></svg><div class="cb" style="left:44px"></div><div class="abs" style="left:63px;top:9px;width:13px;height:13px;background:#f1f4fb;border:1px solid #6d87c7"></div><svg style="left:63px;top:9px" width="13" height="13" viewBox="0 0 13 13"><path d="M2 4.500 H11 M2 7 H11 M2 9.500 H11" stroke="#3d5db5" stroke-width="1.200" stroke-dasharray="1.200 1.200"/></svg><div class="tx" style="left:85px">2层视图<span style="margin-left:12px">(</span>剖切框)</div></div>
<div class="r" style="top:266px"><div class="cb" style="left:64px"></div><svg style="left:84px;top:10px" width="12" height="11" viewBox="0 0 12 11"><rect x="0" y="0" width="4" height="3.500" fill="#f2f2f2"/><rect x="5.500" y="0" width="6.500" height="3.500" fill="#f2f2f2"/><rect x="0" y="5" width="12" height="6" fill="#f2f2f2"/></svg><div class="tx" style="left:105px">荷载图</div><svg style="left:279px;top:8px" width="17" height="16" viewBox="0 0 17 16"><path d="M0 15.500 H16 M6.500 15.500 V1.500 H14.500 V15.500" fill="none" stroke="#76c565" stroke-width="1.400"/><rect x="8.300" y="7.500" width="1.800" height="2.500" fill="#76c565"/></svg><div class="abs" style="left:308px;top:9px;width:13px;height:13px;background:#8cc152;border:1px solid #b4dc82"></div><div class="abs" style="left:310px;top:12px;width:9px;height:5px;background:#d6ecc0"></div></div>
<div class="r" style="top:298px"><div class="cb" style="left:64px"></div><div class="abs" style="left:84px;top:9px;width:13px;height:13px;background:linear-gradient(#b7dd7c,#86b94a);border:1px solid #d7efad"></div><div class="tx" style="left:105px">二~五层结构布置图</div></div>
<div class="r" style="top:330px"><div class="cb" style="left:64px"></div><div class="abs" style="left:84px;top:9px;width:13px;height:13px;background:linear-gradient(#b7dd7c,#86b94a);border:1px solid #d7efad"></div><div class="tx" style="left:105px">二~三层梁配筋图</div></div>
<div class="r" style="top:362px"><div class="cb" style="left:64px"></div><div class="abs" style="left:84px;top:9px;width:13px;height:13px;background:linear-gradient(#b7dd7c,#86b94a);border:1px solid #d7efad"></div><div class="tx" style="left:105px">二~五层板配筋图</div></div>
<div class="r" style="top:394px"><div class="cb" style="left:64px"></div><svg style="left:84px;top:10px" width="12" height="11" viewBox="0 0 12 11"><rect x="0" y="0" width="4" height="3.500" fill="#f2f2f2"/><rect x="5.500" y="0" width="6.500" height="3.500" fill="#f2f2f2"/><rect x="0" y="5" width="12" height="6" fill="#f2f2f2"/></svg><div class="tx" style="left:105px">模板图</div></div>
<div class="r" style="top:426px"><svg style="left:29px;top:12px;z-index:2" width="6" height="6" viewBox="0 0 7 7"><path d="M7 0 V7 H0 Z" fill="#f0f0f0"/></svg><div class="cb" style="left:44px"></div><div class="abs" style="left:63px;top:9px;width:13px;height:13px;background:#f1f4fb;border:1px solid #6d87c7"></div><svg style="left:63px;top:9px" width="13" height="13" viewBox="0 0 13 13"><path d="M2 4.500 H11 M2 7 H11 M2 9.500 H11" stroke="#3d5db5" stroke-width="1.200" stroke-dasharray="1.200 1.200"/></svg><div class="tx" style="left:85px">场地-2层_暗柱平面布...</div></div>
<div class="r" style="top:458px"><div class="cb" style="left:64px"></div><div class="abs" style="left:84px;top:9px;width:14px;height:14px;background:#e8ebf7;border:1px solid #6d87c7"></div><div class="abs" style="left:92px;top:12px;width:3px;height:3px;background:#e08a2a"></div><div class="abs" style="left:92px;top:17px;width:3px;height:3px;background:#5f7cc4"></div><div class="tx" style="left:105px">首~2层_暗柱平面...</div></div>
<div class="r" style="top:490px"><svg style="left:8px;top:12px;z-index:2" width="6" height="6" viewBox="0 0 7 7"><path d="M7 0 V7 H0 Z" fill="#f0f0f0"/></svg><div class="cb" style="left:24px"></div><div class="abs" style="left:43px;top:11px;width:7px;height:3px;background:#e0343c"></div><div class="abs" style="left:52px;top:9px;width:6px;height:14px;background:#f4f6fb;border-left:1px solid #6d87c7;border-right:1px solid #6d87c7"></div><div class="abs" style="left:53px;top:13px;width:4px;height:2px;background:#5f7cc4"></div><div class="abs" style="left:53px;top:18px;width:4px;height:2px;background:#5f7cc4"></div><div class="tx" style="left:65px">场地<span style="margin-left:12px">(</span>标准层1)</div><svg style="left:307px;top:8px" width="17" height="16" viewBox="0 0 17 16"><path d="M8.500 0 L11.090 5.240 L16.870 6.080 L12.680 10.160 L13.670 15.920 L8.500 13.200 L3.330 15.920 L4.320 10.160 L.13 6.080 L5.910 5.240 Z" fill="#e2e2e2"/></svg></div>
<div class="r" style="top:522px"><div class="cb" style="left:44px"></div><svg style="left:63px;top:10px" width="16" height="12" viewBox="0 0 16 12"><path d="M.5 .5 H4.500 V4.500 H.5 Z M.5 7.500 H4.500 V11.500 H.5 Z" fill="none" stroke="#e8e8e8" stroke-width="1"/><path d="M6.500 1 H16 M6.500 4 H16 M6.500 8 H16 M6.500 11 H16" stroke="#e8e8e8" stroke-width="1"/></svg><div class="tx" style="left:85px">场地<span style="margin-left:12px">(</span>楼层三维图)</div></div>
<div class="r" style="top:554px"><svg style="left:8px;top:12px;z-index:2" width="6" height="6" viewBox="0 0 7 7"><path d="M7 0 V7 H0 Z" fill="#f0f0f0"/></svg><div class="cb" style="left:24px"></div><div class="abs" style="left:43px;top:11px;width:7px;height:3px;background:#e0343c"></div><div class="abs" style="left:52px;top:9px;width:6px;height:14px;background:#f4f6fb;border-left:1px solid #6d87c7;border-right:1px solid #6d87c7"></div><div class="abs" style="left:53px;top:13px;width:4px;height:2px;background:#5f7cc4"></div><div class="abs" style="left:53px;top:18px;width:4px;height:2px;background:#5f7cc4"></div><div class="tx" style="left:65px">基础面<span style="margin-left:12px">(</span>基础面)</div><svg style="left:307px;top:8px" width="17" height="16" viewBox="0 0 17 16"><path d="M8.500 0 L11.090 5.240 L16.870 6.080 L12.680 10.160 L13.670 15.920 L8.500 13.200 L3.330 15.920 L4.320 10.160 L.13 6.080 L5.910 5.240 Z" fill="#e2e2e2"/></svg></div>
<div class="r" style="top:586px"><div class="cb" style="left:44px"></div><svg style="left:63px;top:10px" width="16" height="12" viewBox="0 0 16 12"><path d="M.5 .5 H4.500 V4.500 H.5 Z M.5 7.500 H4.500 V11.500 H.5 Z" fill="none" stroke="#e8e8e8" stroke-width="1"/><path d="M6.500 1 H16 M6.500 4 H16 M6.500 8 H16 M6.500 11 H16" stroke="#e8e8e8" stroke-width="1"/></svg><div class="tx" style="left:85px">基础面<span style="margin-left:12px">(</span>楼层三维图)</div></div>
<div class="r" style="top:618px"><svg style="left:8px;top:12px;z-index:2" width="6" height="6" viewBox="0 0 7 7"><path d="M7 0 V7 H0 Z" fill="#f0f0f0"/></svg><div class="cb" style="left:24px"></div><div class="abs" style="left:43px;top:7px;width:9px;height:9px;background:#9ad45a;border:1px solid #4c8f22"></div><div class="abs" style="left:47px;top:11px;width:11px;height:11px;background:#dfe9fb;border:1px solid #4a74c9"></div><svg style="left:47px;top:11px" width="11" height="11" viewBox="0 0 11 11"><path d="M2.500 4 H8.500 M2.500 6 H8.500 M2.500 8 H8.500 M4.500 3 V9 M6.500 3 V9" stroke="#4a74c9" stroke-width=".8"/></svg><div class="tx" style="left:65px">系统三维图</div></div>
<div class="r" style="top:650px"><div class="cb" style="left:44px"></div><div class="abs" style="left:63px;top:9px;width:13px;height:13px;background:linear-gradient(135deg,#d6dde8,#a9b6c8);border:1px solid #e4e9f1"></div><div class="tx" style="left:85px">全视图</div></div>
<div class="r" style="top:682px"><div class="cb" style="left:24px"></div><div class="abs" style="left:43px;top:9px;width:13px;height:13px;border-radius:50%;background:radial-gradient(circle at 40% 35%,#d8d8d8,#9a9a9a 70%,#777)"></div><div class="tx" style="left:65px">地质资料</div></div>
<div class="r" style="top:714px"><div class="cb" style="left:24px"></div><div class="abs" style="left:43px;top:9px;width:13px;height:13px;border-radius:50%;background:radial-gradient(circle at 40% 35%,#d8d8d8,#9a9a9a 70%,#777)"></div><div class="tx" style="left:65px">目录</div></div>
<div class="ln" style="left:10px;top:74px;width:1px;height:668px"></div>
<div class="ln" style="left:10px;top:122px;width:12px;height:1px"></div>
<div class="ln" style="left:10px;top:186px;width:12px;height:1px"></div>
<div class="ln" style="left:10px;top:506px;width:12px;height:1px"></div>
<div class="ln" style="left:10px;top:570px;width:12px;height:1px"></div>
<div class="ln" style="left:10px;top:634px;width:12px;height:1px"></div>
<div class="ln" style="left:10px;top:698px;width:12px;height:1px"></div>
<div class="ln" style="left:10px;top:730px;width:12px;height:1px"></div>
<div class="ln" style="left:50px;top:74px;width:1px;height:16px"></div>
<div class="ln" style="left:50px;top:90px;width:12px;height:1px"></div>
<div class="ln" style="left:30px;top:138px;width:1px;height:16px"></div>
<div class="ln" style="left:30px;top:154px;width:12px;height:1px"></div>
<div class="ln" style="left:30px;top:202px;width:1px;height:240px"></div>
<div class="ln" style="left:30px;top:218px;width:12px;height:1px"></div>
<div class="ln" style="left:30px;top:250px;width:12px;height:1px"></div>
<div class="ln" style="left:30px;top:442px;width:12px;height:1px"></div>
<div class="ln" style="left:50px;top:266px;width:1px;height:144px"></div>
<div class="ln" style="left:50px;top:282px;width:12px;height:1px"></div>
<div class="ln" style="left:50px;top:314px;width:12px;height:1px"></div>
<div class="ln" style="left:50px;top:346px;width:12px;height:1px"></div>
<div class="ln" style="left:50px;top:378px;width:12px;height:1px"></div>
<div class="ln" style="left:50px;top:410px;width:12px;height:1px"></div>
<div class="ln" style="left:50px;top:458px;width:1px;height:16px"></div>
<div class="ln" style="left:50px;top:474px;width:12px;height:1px"></div>
<div class="ln" style="left:30px;top:522px;width:1px;height:16px"></div>
<div class="ln" style="left:30px;top:538px;width:12px;height:1px"></div>
<div class="ln" style="left:30px;top:586px;width:1px;height:16px"></div>
<div class="ln" style="left:30px;top:602px;width:12px;height:1px"></div>
<div class="ln" style="left:30px;top:650px;width:1px;height:16px"></div>
<div class="ln" style="left:30px;top:666px;width:12px;height:1px"></div>
<div class="abs" style="left:0;top:202px;width:1px;height:32px;background:#292929"></div>
  </div>
  <!-- scrollbar -->
  <div class="abs" style="left:326px;top:74px;width:17px;height:668px;background:#2e2e2e"></div>
  <div class="abs" style="left:326px;top:75px;width:17px;height:37px;background:#3d3d3d"></div>
  <div class="abs" style="left:328px;top:78px;width:13px;height:2px;background:#9a9a9a"></div>
  <div class="abs" style="left:328px;top:82px;border:6.500px solid transparent;border-bottom:8px solid #9a9a9a;border-top:0"></div>
  <div class="abs" style="left:330px;top:100px;border:4.500px solid transparent;border-bottom:5px solid #9a9a9a;border-top:0"></div>
  <div class="abs" style="left:329px;top:337px;width:12px;height:317px;background:#404040"></div>
  <div class="abs" style="left:326px;top:704px;width:17px;height:37px;background:#3d3d3d"></div>
  <div class="abs" style="left:330px;top:710px;border:4.500px solid transparent;border-top:5px solid #9a9a9a;border-bottom:0"></div>
  <div class="abs" style="left:328px;top:724px;border:6.500px solid transparent;border-top:8px solid #9a9a9a;border-bottom:0"></div>
  <div class="abs" style="left:328px;top:734px;width:13px;height:2px;background:#9a9a9a"></div>
  <!-- bottom toolbar -->
  <div class="abs" style="left:0;top:742px;width:343px;height:57px;background:#3c3c3c;border-top:1px solid #555"></div><div class="abs" style="left:0;top:799px;width:345px;height:4px;background:#39414e"></div>
  <div class="abs" style="left:2px;top:752px;width:36px;height:36px;background:#4b4b4b;border-radius:4px"></div>
  <svg style="left:2px;top:752px" width="36" height="36" viewBox="0 0 36 36"><defs><linearGradient id="gsv" x1="0" y1="0" x2="1" y2="1"><stop offset="0" stop-color="#eef2f8"/><stop offset="1" stop-color="#9aa8c0"/></linearGradient><linearGradient id="gor" x1="0" y1="0" x2="1" y2="1"><stop offset="0" stop-color="#fbd27a"/><stop offset="1" stop-color="#e8901a"/></linearGradient></defs><path d="M27 30 L14 13" stroke="url(#gsv)" stroke-width="4.600" stroke-linecap="round"/><path d="M3.500 9.500 C3 15 8 19 13.500 17.500 C17.500 16 19 11.500 17 7.500 C16.500 6.500 15.500 5.500 14.500 5 C15.500 8 14.500 11 12 12.500 C9 14 5.500 12.500 3.500 9.500 Z" fill="url(#gsv)"/><path d="M18 6 C23 3 28 6 30 11 L33.500 13 L30.500 18.500 L27 16.500 C26.500 12.500 24 9 19.500 9 Z" fill="url(#gsv)"/><path d="M6.500 30.500 L21.500 15.500" stroke="url(#gor)" stroke-width="4.600" stroke-linecap="round"/></svg>
  <div class="abs" style="left:50px;top:754px;width:95px;height:33px;background:#454545;border:1px solid #606060"></div>
  <div class="abs" style="left:144px;top:754px;width:28px;height:33px;background:#454545;border:1px solid #606060"></div>
  <svg style="left:59px;top:759px" width="22" height="22" viewBox="0 0 22 22"><g transform="translate(11 11)" stroke-width="5.800" fill="none"><path d="M0 -7.800 A7.800 7.800 0 0 1 5.520 -5.520" stroke="#8a70d2"/><path d="M5.520 -5.520 A7.800 7.800 0 0 1 7.800 0" stroke="#a83fc8"/><path d="M7.800 0 A7.800 7.800 0 0 1 5.520 5.520" stroke="#e0407c"/><path d="M5.520 5.520 A7.800 7.800 0 0 1 0 7.800" stroke="#e8544c"/><path d="M0 7.800 A7.800 7.800 0 0 1 -5.520 5.520" stroke="#f8c274"/><path d="M-5.520 5.520 A7.800 7.800 0 0 1 -7.800 0" stroke="#8cc242"/><path d="M-7.800 0 A7.800 7.800 0 0 1 -5.520 -5.520" stroke="#5cc2e2"/><path d="M-5.520 -5.520 A7.800 7.800 0 0 1 0 -7.800" stroke="#6a7de2"/></g></svg>
  <div class="t" style="left:88px;top:763px;color:#fff">视觉样式</div>
  <svg style="left:152px;top:764px" width="11" height="13" viewBox="0 0 11 13"><defs><linearGradient id="gb152" x1="0" y1="0" x2="0" y2="1"><stop offset="0" stop-color="#8cc4f8"/><stop offset="1" stop-color="#2b7ad8"/></linearGradient></defs><path d="M5.500 0 L11 7 H8 V13 H3 V7 H0 Z" fill="url(#gb152)"/></svg>
  <div class="abs" style="left:188px;top:754px;width:95px;height:33px;background:#454545;border:1px solid #606060"></div>
  <div class="abs" style="left:282px;top:754px;width:28px;height:33px;background:#454545;border:1px solid #606060"></div>
  <div class="abs" style="left:199px;top:760px;width:19px;height:20px;background:linear-gradient(#a4d454,#7cb82c);border-radius:2px"></div>
  <div class="abs" style="left:202px;top:763px;width:13px;height:9px;background:linear-gradient(#8fb8ea,#dfeefc);border:1px solid #f4f8f0"></div><svg style="left:203px;top:764px" width="11" height="7" viewBox="0 0 11 7"><path d="M0 7 L3.500 3 L6 5.500 L8 4 L11 7 Z" fill="#5a9a3a"/></svg>
  <div class="t" style="left:226px;top:763px;color:#fff">底图管理</div>
  <svg style="left:290px;top:764px" width="11" height="13" viewBox="0 0 11 13"><defs><linearGradient id="gb290" x1="0" y1="0" x2="0" y2="1"><stop offset="0" stop-color="#8cc4f8"/><stop offset="1" stop-color="#2b7ad8"/></linearGradient></defs><path d="M5.500 0 L11 7 H8 V13 H3 V7 H0 Z" fill="url(#gb290)"/></svg>
</div>
<div class="abs" style="left:343px;top:206px;width:2px;height:806px;background:#3b4453"></div>
<div class="t" style="left:349px;top:213px;color:#e8e8e8;letter-spacing:.4px">[−][俯视][二维线框]</div>
<div class="abs" style="left:1859px;top:223px;width:10px;height:3px;background:#f0f0f0"></div>
<div class="abs" style="left:1881px;top:217px;width:8px;height:8px;border:2px solid #f0f0f0"></div>
<div class="abs" style="left:1879px;top:219px;width:8px;height:8px;border:2px solid #f0f0f0;background:#212830"></div>
<svg style="left:1899px;top:217.500px" width="9" height="9" viewBox="0 0 9 9"><path d="M1 1 L8 8 M8 1 L1 8" stroke="#f4f4f4" stroke-width="2.700"/></svg>
<div id="dlg">
<div class="abs" style="left:6px;top:9px;width:15px;height:15px;background:linear-gradient(90deg,#3f4f95,#4a4a8c)"></div>
<svg style="left:8px;top:11px" width="11" height="11" viewBox="0 0 11 11"><path d="M1 0 C3 3 3 8 1 11 M5 0 C3 3 3 8 5 11 M6 0 C8 3 8 8 6 11 M10 0 C8 3 8 8 10 11" fill="none" stroke="#cfd6f5" stroke-width="1"/></svg>
<div class="t" style="left:26px;top:8px;color:#c9c9c9">楼层信息</div>
<div class="t" style="left:919px;top:5px;font-size:17px;font-weight:bold;color:#3a9bdc;line-height:18px;height:18px">?</div>
<svg style="left:953px;top:8px" width="11" height="11" viewBox="0 0 11 11"><path d="M.5 .5 L10.500 10.500 M10.500 .5 L.5 10.500" stroke="#d0d0d0" stroke-width="1.300"/></svg>
<div class="abs" style="left:15px;top:65px;width:946px;height:447px;background:#292929;border:1px solid #5c5c5c"></div>
<div class="abs" style="left:795px;top:42px;width:83px;height:24px;background:#292929;border:1px solid #5c5c5c;border-bottom:0"></div>
<div class="t" style="left:27px;top:46.5px;color:#f2f2f2">材料标号</div>
<div class="t" style="left:99px;top:46.5px;color:#f2f2f2">混凝土构件抗震等级</div>
<div class="t" style="left:231px;top:46.5px;color:#f2f2f2">钢构件抗震等级</div>
<div class="t" style="left:339px;top:46.5px;color:#f2f2f2">钢筋标号</div>
<div class="t" style="left:411px;top:46.5px;color:#f2f2f2">实配钢筋超配系数</div>
<div class="t" style="left:531px;top:46.5px;color:#f2f2f2">折减系数</div>
<div class="t" style="left:603px;top:46.5px;color:#f2f2f2">配筋属性</div>
<div class="t" style="left:675px;top:46.5px;color:#f2f2f2">导模属性</div>
<div class="t" style="left:747px;top:46.5px;color:#f2f2f2">板信息</div>
<div class="t" style="left:807px;top:46.5px;color:#4f79ff">保护层厚度</div>
<div class="t" style="left:891px;top:46.5px;color:#f2f2f2">人防信息</div>
<div class="abs" style="left:28px;top:78px;width:920px;height:421px;border:1px solid #646464"></div>
<div class="abs" style="left:29px;top:79px;width:918px;height:31px;background:#4f4f4f"></div>
<div class="abs" style="left:29px;top:110px;width:918px;height:1px;background:#646464"></div>
<div class="abs" style="left:29px;top:111px;width:15px;height:255px;background:#4f4f4f"></div>
<div class="abs" style="left:931px;top:79px;width:16px;height:388px;background:#4f4f4f"></div>
<div class="abs" style="left:45px;top:111px;width:885px;height:31px;background:#292929"></div>
<div class="abs" style="left:29px;top:142px;width:901px;height:1px;background:#646464"></div>
<div class="t c" style="left:155px;top:118.5px;color:#f6f6f6">基础面</div>
<div class="t c" style="left:332.5px;top:118.5px;color:#f6f6f6">15</div>
<div class="t c" style="left:465.0px;top:118.5px;color:#f6f6f6">20</div>
<div class="t c" style="left:598.0px;top:118.5px;color:#f6f6f6">20</div>
<div class="t c" style="left:731.0px;top:118.5px;color:#f6f6f6">20</div>
<div class="t c" style="left:864.0px;top:118.5px;color:#f6f6f6">15</div>
<div class="abs" style="left:45px;top:143px;width:885px;height:31px;background:#333333"></div>
<div class="abs" style="left:29px;top:174px;width:901px;height:1px;background:#646464"></div>
<div class="t c" style="left:155px;top:150.5px;color:#f6f6f6">场地</div>
<div class="t c" style="left:332.5px;top:150.5px;color:#f6f6f6">15</div>
<div class="t c" style="left:465.0px;top:150.5px;color:#f6f6f6">20</div>
<div class="t c" style="left:598.0px;top:150.5px;color:#f6f6f6">20</div>
<div class="t c" style="left:731.0px;top:150.5px;color:#f6f6f6">20</div>
<div class="t c" style="left:864.0px;top:150.5px;color:#f6f6f6">15</div>
<div class="abs" style="left:45px;top:175px;width:885px;height:31px;background:#292929"></div>
<div class="abs" style="left:29px;top:206px;width:901px;height:1px;background:#646464"></div>
<div class="t c" style="left:155px;top:182.5px;color:#f6f6f6">2层</div>
<div class="t c" style="left:332.5px;top:182.5px;color:#f6f6f6">15</div>
<div class="t c" style="left:465.0px;top:182.5px;color:#f6f6f6">20</div>
<div class="t c" style="left:598.0px;top:182.5px;color:#f6f6f6">20</div>
<div class="t c" style="left:731.0px;top:182.5px;color:#f6f6f6">20</div>
<div class="t c" style="left:864.0px;top:182.5px;color:#f6f6f6">15</div>
<div class="abs" style="left:45px;top:207px;width:885px;height:31px;background:#333333"></div>
<div class="abs" style="left:29px;top:238px;width:901px;height:1px;background:#646464"></div>
<div class="t c" style="left:155px;top:214.5px;color:#f6f6f6">3层</div>
<div class="t c" style="left:332.5px;top:214.5px;color:#f6f6f6">15</div>
<div class="t c" style="left:465.0px;top:214.5px;color:#f6f6f6">20</div>
<div class="t c" style="left:598.0px;top:214.5px;color:#f6f6f6">20</div>
<div class="t c" style="left:731.0px;top:214.5px;color:#f6f6f6">20</div>
<div class="t c" style="left:864.0px;top:214.5px;color:#f6f6f6">15</div>
<div class="abs" style="left:45px;top:239px;width:885px;height:31px;background:#292929"></div>
<div class="abs" style="left:29px;top:270px;width:901px;height:1px;background:#646464"></div>
<div class="t c" style="left:155px;top:246.5px;color:#f6f6f6">4层</div>
<div class="t c" style="left:332.5px;top:246.5px;color:#f6f6f6">15</div>
<div class="t c" style="left:465.0px;top:246.5px;color:#f6f6f6">20</div>
<div class="t c" style="left:598.0px;top:246.5px;color:#f6f6f6">20</div>
<div class="t c" style="left:731.0px;top:246.5px;color:#f6f6f6">20</div>
<div class="t c" style="left:864.0px;top:246.5px;color:#f6f6f6">15</div>
<div class="abs" style="left:45px;top:271px;width:885px;height:31px;background:#333333"></div>
<div class="abs" style="left:29px;top:302px;width:901px;height:1px;background:#646464"></div>
<div class="t c" style="left:155px;top:278.5px;color:#f6f6f6">5层</div>
<div class="t c" style="left:332.5px;top:278.5px;color:#f6f6f6">15</div>
<div class="t c" style="left:465.0px;top:278.5px;color:#f6f6f6">20</div>
<div class="t c" style="left:598.0px;top:278.5px;color:#f6f6f6">20</div>
<div class="t c" style="left:731.0px;top:278.5px;color:#f6f6f6">20</div>
<div class="t c" style="left:864.0px;top:278.5px;color:#f6f6f6">15</div>
<div class="abs" style="left:45px;top:303px;width:885px;height:31px;background:#292929"></div>
<div class="abs" style="left:29px;top:334px;width:901px;height:1px;background:#646464"></div>
<div class="t c" style="left:155px;top:310.5px;color:#f6f6f6">6层</div>
<div class="t c" style="left:332.5px;top:310.5px;color:#f6f6f6">15</div>
<div class="t c" style="left:465.0px;top:310.5px;color:#f6f6f6">20</div>
<div class="t c" style="left:598.0px;top:310.5px;color:#f6f6f6">20</div>
<div class="t c" style="left:731.0px;top:310.5px;color:#f6f6f6">20</div>
<div class="t c" style="left:864.0px;top:310.5px;color:#f6f6f6">15</div>
<div class="abs" style="left:45px;top:335px;width:885px;height:31px;background:#333333"></div>
<div class="abs" style="left:29px;top:366px;width:901px;height:1px;background:#646464"></div>
<div class="t c" style="left:155px;top:342.5px;color:#f6f6f6">天面层</div>
<div class="t c" style="left:332.5px;top:342.5px;color:#f6f6f6">15</div>
<div class="t c" style="left:465.0px;top:342.5px;color:#f6f6f6">20</div>
<div class="t c" style="left:598.0px;top:342.5px;color:#f6f6f6">20</div>
<div class="t c" style="left:731.0px;top:342.5px;color:#f6f6f6">20</div>
<div class="t c" style="left:864.0px;top:342.5px;color:#f6f6f6">15</div>
<div class="t c" style="left:155.5px;top:86.5px;color:#f2f2f2">楼层名称</div>
<div class="t c" style="left:332.5px;top:86.5px;color:#f2f2f2">板</div>
<div class="t c" style="left:465.0px;top:86.5px;color:#f2f2f2">梁</div>
<div class="t c" style="left:598.0px;top:86.5px;color:#f2f2f2">柱</div>
<div class="t c" style="left:731.0px;top:86.5px;color:#f2f2f2">斜撑</div>
<div class="t c" style="left:864.0px;top:86.5px;color:#f2f2f2">墙</div>
<div class="abs" style="left:44px;top:79px;width:1px;height:288px;background:#646464"></div>
<div class="abs" style="left:266px;top:79px;width:1px;height:288px;background:#646464"></div>
<div class="abs" style="left:398px;top:79px;width:1px;height:288px;background:#646464"></div>
<div class="abs" style="left:531px;top:79px;width:1px;height:288px;background:#646464"></div>
<div class="abs" style="left:664px;top:79px;width:1px;height:288px;background:#646464"></div>
<div class="abs" style="left:797px;top:79px;width:1px;height:288px;background:#646464"></div>
<div class="abs" style="left:930px;top:79px;width:1px;height:388px;background:#646464"></div>
<svg style="left:35px;top:122px" width="5" height="9" viewBox="0 0 5 9"><path d="M0 0 L5 4.500 L0 9 Z" fill="#f0f0f0"/></svg>
<div class="abs" style="left:935px;top:117px;border:4px solid transparent;border-bottom:4px solid #b8b8b8;border-top:0"></div>
<div class="abs" style="left:935px;top:458px;border:4px solid transparent;border-top:4px solid #b8b8b8;border-bottom:0"></div>
<div class="abs" style="left:29px;top:467px;width:918px;height:1px;background:#646464"></div>
<div class="t" style="left:15px;top:530.5px;color:#f2f2f2">体系:</div>
<div class="abs" style="left:65px;top:527px;width:262px;height:22px;background:#333;border:1px solid #6a6a6a"></div>
<div class="t" style="left:70px;top:530.5px;color:#f2f2f2">体系0</div>
<div class="abs" style="left:701px;top:522px;width:92px;height:32px;background:#454545;border:1px solid #616161"></div>
<div class="abs" style="left:714px;top:528px;width:21px;height:21px;border-radius:50%;background:radial-gradient(circle at 45% 30%,#c8ec7a,#7fc02a 60%,#5a9a18)"></div>
<svg style="left:718px;top:532px" width="13" height="12" viewBox="0 0 13 12"><path d="M1 6 L5 10.500 L12 1" fill="none" stroke="#fff" stroke-width="2.200"/></svg>
<div class="t" style="left:742px;top:530.5px;color:#f2f2f2">确定(<u>A</u>)</div>
<div class="abs" style="left:870px;top:522px;width:91px;height:32px;background:#454545;border:1px solid #616161"></div>
<div class="abs" style="left:882px;top:528px;width:21px;height:21px;border-radius:50%;background:radial-gradient(circle at 45% 30%,#f47a7a,#d8282e 60%,#a81218)"></div>
<svg style="left:888px;top:534px" width="9" height="9" viewBox="0 0 9 9"><path d="M1 1 L8 8 M8 1 L1 8" stroke="#fff" stroke-width="2.400"/></svg>
<div class="t" style="left:910px;top:530.5px;color:#f2f2f2">取消(<u>C</u>)</div>
</div>
<div class="abs" style="left:1786px;top:254px;width:110px;height:110px;border-radius:50%;border:13px solid #3d444e"></div>
<div class="t" style="left:1829px;top:246px;font-size:17px;line-height:20px;height:20px;color:#8b9097">北</div>
<div class="t" style="left:1885px;top:304px;font-size:17px;line-height:20px;height:20px;color:#8b9097">东</div>
<div id="img">
<div class="abs" style="left:5px;top:5px;width:504px;height:509px;background:#1e242c"></div>
<div class="abs" style="left:5px;top:5px;width:504px;height:17px;background:#a9a9a9"></div>
<div class="t" style="left:0px;top:6px;font-size:10.500px;letter-spacing:.55px;color:#ececec">空间结构</div>
<div class="t" style="left:72.5px;top:6px;font-size:10.500px;letter-spacing:.55px;color:#ececec">鉴定加固</div>
<div class="t" style="left:146.5px;top:6px;font-size:10.500px;letter-spacing:.55px;color:#ececec">预制构件拆分</div>
<div class="t" style="left:240px;top:6px;font-size:10.500px;letter-spacing:.55px;color:#ececec">地质资料</div>
<div class="t" style="left:312px;top:6px;font-size:10.500px;letter-spacing:.55px;color:#2f62f0;font-weight:bold">DWG转换</div>
<div class="t" style="left:391px;top:6px;font-size:10.500px;letter-spacing:.55px;color:#2f62f0;font-weight:bold">上部结构计算</div>
<div class="t" style="left:486.5px;top:6px;font-size:10.500px;letter-spacing:.55px;color:#2f62f0;font-weight:bold">砌体</div>
<div class="abs" style="left:0px;top:0px;width:5px;height:519px;background:#fff"></div>
<div class="abs" style="left:5px;top:22px;width:504px;height:68px;background:linear-gradient(#fdfdfe,#eef0f3)"></div>
<div class="abs" style="left:5px;top:90px;width:504px;height:16px;background:linear-gradient(#eef0f2,#e2e5e9)"></div>
<div class="abs" style="left:5px;top:89px;width:504px;height:1px;background:#cfd3d8"></div>
<div class="abs" style="left:234px;top:24px;width:1px;height:80px;background:#d5d8dd"></div>
<div class="abs" style="left:306px;top:24px;width:1px;height:80px;background:#d5d8dd"></div>
<div class="abs" style="left:413px;top:24px;width:1px;height:80px;background:#d5d8dd"></div>
<div class="abs" style="left:234px;top:23px;width:38px;height:66px;background:#a9cdf0;border:2px dashed #e81123"></div>
<svg style="left:16px;top:25px" width="28" height="28" viewBox="0 0 28 28"><path d="M4.900 5.700 H27.200 L23.200 9.900 H.9 Z" fill="#d4e6fe" stroke="#2a64d0" stroke-width="1.100" stroke-linejoin="round"/><path d="M23.200 9.900 L27.200 5.700 V15.600 L23.200 19.600 Z" fill="#86b6f6" stroke="#2a64d0" stroke-width="1.100" stroke-linejoin="round"/><path d="M.9 9.900 H23.200 V19.600 L.9 22.500 Z" fill="#a9cdfb" stroke="#2a64d0" stroke-width="1.300" stroke-linejoin="round"/></svg>
<svg style="left:59px;top:25px" width="28" height="28" viewBox="0 0 28 28"><path d="M1.500 27 V15 L13 3 H27 M1.500 27 H7 L17 18.500 H27 M1.500 18.500 L13 6.500 H27 M1.500 23 L5 23" fill="none" stroke="#353c4a" stroke-width="1.500"/><path d="M4 25 V14 M6.500 23 V11.500 M9 21 V9 M11.500 19.500 V6.500 M14 19 V5 M17 18 V5 M20 18 V5 M23 18 V5 M26 18 V5" stroke="#353c4a" stroke-width="1.300"/><path d="M7 27 L17 18.500 M9 27 L18 20 H27" fill="none" stroke="#353c4a" stroke-width="1"/></svg>
<svg style="left:92px;top:25px" width="28" height="28" viewBox="0 0 28 28"><rect x="1.700" y="1.900" width="17.700" height="25.500" rx="1" fill="#f7f8fb" stroke="#353c4a" stroke-width="1.400"/><rect x="4.500" y="4.700" width="9.200" height="8.100" fill="#1f4788"/><rect x="5.500" y="5.500" width="7.200" height="3" fill="#3f6cb0"/><rect x="14.800" y="4.700" width="2.300" height="8.100" fill="#a8adb8"/><path d="M5 16.800 H16 M7.300 15 V19.500 M5 22.500 H12.500" stroke="#353c4a" stroke-width="1.300"/><path d="M20 21 L26.500 16.500" stroke="#d8dce4" stroke-width="2.600" stroke-linecap="round"/><ellipse cx="19.600" cy="23" rx="5" ry="4" transform="rotate(-30 19.600 23)" fill="#8a3c0c"/><ellipse cx="18.600" cy="22" rx="2.200" ry="1.400" transform="rotate(-30 18.600 22)" fill="#b86a30"/></svg>
<svg style="left:127px;top:25px" width="28" height="28" viewBox="0 0 28 28"><path d="M18.200 9.500 L23.500 1.900 C25 .5 27.500 2 26.800 4 L22.200 12 Z" fill="#1a4fc0"/><path d="M8.500 12.200 L14.200 8 L24.200 12.800 L21.700 17.200 Z" fill="#1f5ad0"/><path d="M-.7 17.900 L8.500 12.200 L21.700 16.800 L15.400 27.100 C10 27 3 23 -.7 17.900 Z" fill="#f28c1c"/><path d="M3 19.500 L11 13.500 M6.500 22 L14.500 14.800 M10.500 24.500 L18 16 M14 26.500 L20.500 17" stroke="#b85c08" stroke-width="1"/><path d="M8.500 12.200 L21.700 16.800" stroke="#8a4a10" stroke-width="1"/></svg>
<svg style="left:159px;top:25px" width="28" height="28" viewBox="0 0 28 28"><rect x="1.700" y="1.900" width="14.900" height="24" fill="#f4f5f8" stroke="#353c4a" stroke-width="1.500"/><path d="M1.700 6 H16.600 M1.700 10 H16.600 M1.700 14 H16.600 M1.700 18 H16.600 M1.700 22 H16.600 M5.500 1.900 V25.900 M9.300 1.900 V25.900 M13 1.900 V25.900" stroke="#9aa2b0" stroke-width=".7"/><rect x="16.600" y="3.600" width="8.600" height="8.600" fill="#f4f5f8" stroke="#353c4a" stroke-width="1.500"/><path d="M16.600 7.900 H25.200 M20.900 3.600 V12.200" stroke="#9aa2b0" stroke-width=".7"/><rect x="12.600" y="12.200" width="14.900" height="14.900" fill="#fafbfd" stroke="#353c4a" stroke-width="1.500"/><path d="M12.600 16 H27.500 M12.600 19.700 H27.500 M12.600 23.400 H27.500 M17.500 12.200 V27.100 M22.500 12.200 V27.100" stroke="#9aa2b0" stroke-width=".7"/></svg>
<svg style="left:197px;top:25px" width="28" height="28" viewBox="0 0 28 28"><path d="M7.200 17 L21 8.500 V13 L7.200 21.500 Z" fill="#a9d8f8" stroke="#5a9ad8" stroke-width=".5"/><path d="M3.500 13.500 L20.500 3.300 L24.500 4.600 L7.200 15.500 Z" fill="#3a98e8" stroke="#1f6fc0" stroke-width=".5"/><path d="M.3 14.500 L7.200 16.200 V27.700 L.3 25.400 Z" fill="#f3d25a" stroke="#9a7a14" stroke-width=".6"/><path d="M7.200 16.200 L10 14.300 V25.200 L7.200 27.700 Z" fill="#c9a430"/><path d="M.3 14.500 L3 12.800 L10 14.300 L7.200 16.200 Z" fill="#f8e28a" stroke="#9a7a14" stroke-width=".4"/><path d="M19.800 3.600 L26.100 5.300 V15.600 L19.800 13.900 Z" fill="#f3d25a" stroke="#9a7a14" stroke-width=".6"/><path d="M26.100 5.300 L27.800 4 V14 L26.100 15.600 Z" fill="#c9a430"/><path d="M19.800 3.600 L21.600 2.300 L27.800 4 L26.100 5.300 Z" fill="#f8e28a" stroke="#9a7a14" stroke-width=".4"/></svg>
<svg style="left:239px;top:25px" width="28" height="28" viewBox="0 0 28 28"><path d="M4 2.400 H24.500 V22 H6" fill="#eef1f6" stroke="#353c4a" stroke-width="1.300"/><path d="M1.100 5 C1.100 1.500 6.300 1.500 6.300 5 V21 C6.300 24.500 1.100 24.500 1.100 21 Z" fill="#f7f8fb" stroke="#353c4a" stroke-width="1.200"/><path d="M3 22 C3 20.500 5 20.500 5 22" fill="none" stroke="#353c4a" stroke-width=".9"/><path d="M7.800 1.700 H24.100 L15.900 9.800 Z" fill="#353c4a"/><path d="M13.300 3.300 H18.500 L15.900 6 Z" fill="#f4f6fa"/><rect x="16.700" y="13.600" width="10.400" height="13.300" rx=".8" fill="#fdfdfe" stroke="#353c4a" stroke-width="1.300"/><rect x="18.600" y="15.300" width="5" height="5" fill="#1f4788"/><rect x="24.300" y="15.300" width="1.200" height="5" fill="#a8adb8"/><path d="M19 23.300 H25 M19 23.300 L20.500 22.200 M19 23.300 L20.500 24.400" fill="none" stroke="#353c4a" stroke-width="1"/></svg>
<svg style="left:273px;top:25px" width="28" height="28" viewBox="0 0 28 28"><defs><linearGradient id="gcy" x1="0" y1="0" x2="1" y2="0"><stop offset="0" stop-color="#b9bec8"/><stop offset=".35" stop-color="#fdfdfe"/><stop offset=".7" stop-color="#d0d4dc"/><stop offset="1" stop-color="#8e949f"/></linearGradient></defs><path d="M2 6 V22 C2 28.500 25.700 28.500 25.700 22 V6 Z" fill="url(#gcy)" stroke="#3a404c" stroke-width="1.200"/><path d="M2 14.500 C2 20.500 25.700 20.500 25.700 14.500" fill="none" stroke="#3a404c" stroke-width="1.200"/><ellipse cx="13.850" cy="6" rx="11.850" ry="5" fill="#f4f5f8" stroke="#3a404c" stroke-width="1.200"/></svg>
<svg style="left:319px;top:25px" width="28" height="28" viewBox="0 0 28 28"><path d="M8.700 15.800 H16.100 V26.200 H8.700 Z" fill="#f2f4f8" stroke="#353c4a" stroke-width="1.200"/><path d="M8.700 15.800 L12.500 4 L17.500 2.500 V21 L16.100 26.200 V15.800 Z" fill="#dfe3ea" stroke="#353c4a" stroke-width="1.200" stroke-linejoin="round"/><path d="M12.500 4 L13.500 15.800" stroke="#353c4a" stroke-width=".8"/><path d="M22 3 V25" stroke="#353c4a" stroke-width="1.600"/></svg>
<svg style="left:371px;top:25px" width="28" height="28" viewBox="0 0 28 28"><path d="M7.200 17 L21 8.500 V13 L7.200 21.500 Z" fill="#a9d8f8" stroke="#5a9ad8" stroke-width=".5"/><path d="M3.500 13.500 L20.500 3.300 L24.500 4.600 L7.200 15.500 Z" fill="#3a98e8" stroke="#1f6fc0" stroke-width=".5"/><path d="M.3 14.500 L7.200 16.200 V27.700 L.3 25.400 Z" fill="#f3d25a" stroke="#9a7a14" stroke-width=".6"/><path d="M7.200 16.200 L10 14.300 V25.200 L7.200 27.700 Z" fill="#c9a430"/><path d="M.3 14.500 L3 12.800 L10 14.300 L7.200 16.200 Z" fill="#f8e28a" stroke="#9a7a14" stroke-width=".4"/><path d="M19.800 3.600 L26.100 5.300 V15.600 L19.800 13.900 Z" fill="#f3d25a" stroke="#9a7a14" stroke-width=".6"/><path d="M26.100 5.300 L27.800 4 V14 L26.100 15.600 Z" fill="#c9a430"/><path d="M19.800 3.600 L21.600 2.300 L27.800 4 L26.100 5.300 Z" fill="#f8e28a" stroke="#9a7a14" stroke-width=".4"/></svg>
<svg style="left:419px;top:25px" width="28" height="28" viewBox="0 0 28 28"><defs><linearGradient id="gq" x1="0" y1="0" x2="1" y2="1"><stop offset="0" stop-color="#2f66c0"/><stop offset=".55" stop-color="#123a86"/><stop offset="1" stop-color="#071c50"/></linearGradient></defs><rect x=".7" y="1.700" width="26" height="25.200" rx="3.500" fill="url(#gq)"/><path d="M8 10.500 C8 3 20.500 3 20.500 10 C20.500 14.500 14.500 14.500 14.500 19" fill="none" stroke="#bcd6fb" stroke-width="4.400"/><path d="M8 10.500 C8 3 20.500 3 20.500 10 C20.500 14.500 14.500 14.500 14.500 19" fill="none" stroke="#fff" stroke-width="2.600"/><rect x="12.300" y="21" width="4.400" height="4" fill="#bcd6fb"/><rect x="13.200" y="21.800" width="2.600" height="2.400" fill="#fff"/></svg>
<svg style="left:452px;top:25px" width="28" height="28" viewBox="0 0 28 28"><path d="M5.500 6 H27.800 L26 9.500 H17" fill="#e8eaee" stroke="#555c68" stroke-width=".9"/><path d="M2.800 17 L14 7.800 L18.500 9.200 L8 19.800 Z" fill="#e0202a"/><path d="M2.800 17 L8 19.800 V22.500 L2.800 19.500 Z" fill="#a00c14"/><path d="M8 19.800 L18.500 9.200 V12 L8 22.500 Z" fill="#c4141c"/><circle cx="21.900" cy="17.300" r="4.600" fill="#ffe640" stroke="#c8a010" stroke-width=".8"/><circle cx="20.600" cy="16" r="1.500" fill="#fffbd0"/><rect x="20.300" y="21.500" width="3.200" height="5.200" rx=".8" fill="#c9ced8" stroke="#4a505c" stroke-width=".8"/></svg>
<svg style="left:488px;top:25px" width="21" height="28" viewBox="0 0 21 28"><path d="M4.500 1.500 H1 V26.500 H4.500" fill="none" stroke="#353c4a" stroke-width="1.300"/><path d="M5.500 5.500 H16 M5.500 5.500 V15.500 H9" fill="none" stroke="#353c4a" stroke-width="1.400"/><text x="9" y="23" font-family="Liberation Sans" font-size="17" font-weight="bold" fill="#1a1e28">A</text></svg>
<div class="t c" style="left:30px;top:57px;font-size:10.500px;letter-spacing:.55px;color:#333;text-align:center;line-height:14px;height:auto;">变截面梁</div>
<div class="t c" style="left:73px;top:57px;font-size:10.500px;letter-spacing:.55px;color:#333;text-align:center;line-height:14px;height:auto;">楼梯</div>
<div class="t c" style="left:106px;top:57px;font-size:10.500px;letter-spacing:.55px;color:#333;text-align:center;line-height:14px;height:auto;">拾取<br>布置</div>
<div class="t c" style="left:141px;top:57px;font-size:10.500px;letter-spacing:.55px;color:#333;text-align:center;line-height:14px;height:auto;">定义<br>刷</div>
<div class="t c" style="left:173px;top:57px;font-size:10.500px;letter-spacing:.55px;color:#333;text-align:center;line-height:14px;height:auto;">导入<br>截面</div>
<div class="t c" style="left:211px;top:57px;font-size:10.500px;letter-spacing:.55px;color:#333;text-align:center;line-height:14px;height:auto;">墙洞转<br>连梁</div>
<div class="t c" style="left:287px;top:57px;font-size:10.500px;letter-spacing:.55px;color:#333;text-align:center;line-height:14px;height:auto;">材料</div>
<div class="t c" style="left:333px;top:57px;font-size:10.500px;letter-spacing:.55px;color:#333;text-align:center;line-height:14px;height:auto;">上下对齐</div>
<div class="t c" style="left:385px;top:57px;font-size:10.500px;letter-spacing:.55px;color:#333;text-align:center;line-height:14px;height:auto;">平面对齐</div>
<div class="t c" style="left:433px;top:57px;font-size:10.500px;letter-spacing:.55px;color:#333;text-align:center;line-height:14px;height:auto;">构件<br>查询</div>
<div class="t c" style="left:466px;top:57px;font-size:10.500px;letter-spacing:.55px;color:#333;text-align:center;line-height:14px;height:auto;">超限</div>
<div class="t c" style="left:253px;top:57px;font-size:10.500px;letter-spacing:.55px;color:#333;text-align:center;line-height:14px;height:auto;color:#1b4f9c">本层<br>信息</div>
<div class="t" style="left:487px;top:57px;font-size:10.500px;letter-spacing:.55px;color:#333;text-align:center;line-height:14px;height:auto;text-align:left">显示<br>截面</div>
<div class="abs" style="left:26px;top:80px;border:4px solid transparent;border-top:4px solid #2f7de0;border-bottom:0"></div>
<div class="abs" style="left:69px;top:80px;border:4px solid transparent;border-top:4px solid #2f7de0;border-bottom:0"></div>
<div class="abs" style="left:207px;top:84px;border:4px solid transparent;border-top:4px solid #2f7de0;border-bottom:0"></div>
<div class="abs" style="left:283px;top:80px;border:4px solid transparent;border-top:4px solid #2f7de0;border-bottom:0"></div>
<div class="abs" style="left:329px;top:80px;border:4px solid transparent;border-top:4px solid #2f7de0;border-bottom:0"></div>
<div class="abs" style="left:381px;top:80px;border:4px solid transparent;border-top:4px solid #2f7de0;border-bottom:0"></div>
<div class="abs" style="left:462px;top:80px;border:4px solid transparent;border-top:4px solid #2f7de0;border-bottom:0"></div>
<div class="t c" style="left:269.5px;top:90px;font-size:10.500px;letter-spacing:.55px;color:#222">材料强度</div>
<div class="t c" style="left:359.5px;top:90px;font-size:10.500px;letter-spacing:.55px;color:#222">偏心对齐</div>
<div class="t c" style="left:466px;top:90px;font-size:10.500px;letter-spacing:.55px;color:#222">显示查询</div>
<div class="abs" style="left:509px;top:0px;width:5px;height:519px;background:#fff"></div>
<div class="abs" style="left:20px;top:110px;width:476px;height:389px;background:#f0f0f0"></div>
<div class="abs" style="left:20px;top:110px;width:476px;height:23px;background:#fff"></div>
<div class="t" style="left:23px;top:112.5px;font-size:10.500px;letter-spacing:.55px;color:#111">标准层信息</div>
<svg style="left:478px;top:116px" width="9" height="9" viewBox="0 0 9 9"><path d="M.5 .5 L8.500 8.500 M8.500 .5 L.5 8.500" stroke="#222" stroke-width="1"/></svg>
<div class="t" style="left:29.5px;top:141.5px;font-size:10.500px;letter-spacing:.55px;color:#111;">标准层高<span style="font-family:'Liberation Mono',monospace;font-size:9px;letter-spacing:0">(mm)</span></div>
<div class="in" style="left:149px;top:142px">5000</div>
<div class="t" style="left:29.5px;top:161.3px;font-size:10.500px;letter-spacing:.55px;color:#111;">板厚<span style="font-family:'Liberation Mono',monospace;font-size:9px;letter-spacing:0">(mm)</span></div>
<div class="in" style="left:149px;top:162px">100</div>
<div class="t" style="left:29.5px;top:181.5px;font-size:10.500px;letter-spacing:.55px;color:#111;">柱混凝土强度等级</div>
<div class="in" style="left:149px;top:182px">35</div>
<div class="t" style="left:29.5px;top:201px;font-size:10.500px;letter-spacing:.55px;color:#111;">梁混凝土强度等级</div>
<div class="in" style="left:149px;top:201px">30</div>
<div class="t" style="left:29.5px;top:221.39999999999998px;font-size:10.500px;letter-spacing:.55px;color:#111;">剪力墙混凝土强度等级</div>
<div class="in" style="left:149px;top:222px">35</div>
<div class="t" style="left:29.5px;top:241px;font-size:10.500px;letter-spacing:.55px;color:#111;">板混凝土强度等级</div>
<div class="in" style="left:149px;top:241px">30</div>
<div class="t" style="left:29.5px;top:261px;font-size:10.500px;letter-spacing:.55px;color:#111;">支撑混凝土强度等级</div>
<div class="in" style="left:149px;top:261px">35</div>
<div class="t" style="left:29.5px;top:280.5px;font-size:10.500px;letter-spacing:.55px;color:#111;">柱钢筋保护层厚度<span style="font-family:'Liberation Mono',monospace;font-size:9px;letter-spacing:0">(mm)</span></div>
<div class="in" style="left:149px;top:281px">20</div>
<div class="t" style="left:29.5px;top:300.79999999999995px;font-size:10.500px;letter-spacing:.55px;color:#111;">梁钢筋保护层厚度<span style="font-family:'Liberation Mono',monospace;font-size:9px;letter-spacing:0">(mm)</span></div>
<div class="in" style="left:149px;top:301px">20</div>
<div class="t" style="left:29.5px;top:320px;font-size:10.500px;letter-spacing:.55px;color:#111;">板钢筋保护层厚度<span style="font-family:'Liberation Mono',monospace;font-size:9px;letter-spacing:0">(mm)</span></div>
<div class="in" style="left:149px;top:320px">15</div>
<div class="t" style="left:29.5px;top:340px;font-size:10.500px;letter-spacing:.55px;color:#111;">墙钢筋保护层厚度<span style="font-family:'Liberation Mono',monospace;font-size:9px;letter-spacing:0">(mm)</span></div>
<div class="in" style="left:149px;top:340px">15</div>
<div class="t" style="left:29.5px;top:362.5px;font-size:10.500px;letter-spacing:.55px;color:#111;">柱钢构件钢材</div>
<div class="se" style="left:149px;top:363px">Q345</div>
<div class="t" style="left:29.5px;top:382.5px;font-size:10.500px;letter-spacing:.55px;color:#111;">梁钢构件钢材</div>
<div class="se" style="left:149px;top:383px">Q345</div>
<div class="t" style="left:29.5px;top:402.5px;font-size:10.500px;letter-spacing:.55px;color:#111;">墙钢构件钢材</div>
<div class="se" style="left:149px;top:403px">Q345</div>
<div class="t" style="left:29.5px;top:422.5px;font-size:10.500px;letter-spacing:.55px;color:#111;">支撑钢构件钢材</div>
<div class="se" style="left:149px;top:423px">Q345</div>
<div class="t" style="left:29.5px;top:442.29999999999995px;font-size:10.500px;letter-spacing:.55px;color:#111;">其它钢构件钢材</div>
<div class="se" style="left:149px;top:443px">Q345</div>
<div class="t" style="left:261px;top:141.5px;font-size:10.500px;letter-spacing:.55px;color:#111;">柱主筋级别</div>
<div class="se" style="left:380px;top:142px">HRB400</div>
<div class="t" style="left:261px;top:161.3px;font-size:10.500px;letter-spacing:.55px;color:#111;">梁主筋级别</div>
<div class="se" style="left:380px;top:162px">HRB400</div>
<div class="t" style="left:261px;top:181.5px;font-size:10.500px;letter-spacing:.55px;color:#111;">墙主筋级别</div>
<div class="se" style="left:380px;top:182px">HRB400</div>
<div class="t" style="left:261px;top:201px;font-size:10.500px;letter-spacing:.55px;color:#111;">板主筋级别</div>
<div class="se" style="left:380px;top:201px">HPB235</div>
<div class="t" style="left:261px;top:221.39999999999998px;font-size:10.500px;letter-spacing:.55px;color:#111;">柱箍筋级别</div>
<div class="se" style="left:380px;top:222px">HRB400</div>
<div class="t" style="left:261px;top:241px;font-size:10.500px;letter-spacing:.55px;color:#111;">梁箍筋级别</div>
<div class="se" style="left:380px;top:241px">HRB400</div>
<div class="t" style="left:261px;top:261px;font-size:10.500px;letter-spacing:.55px;color:#111;">边缘构件箍筋级别</div>
<div class="se" style="left:380px;top:261px">HRB400</div>
<div class="t" style="left:261px;top:280.5px;font-size:10.500px;letter-spacing:.55px;color:#111;">墙水平分布筋级别</div>
<div class="se" style="left:380px;top:281px">HRB400</div>
<div class="t" style="left:261px;top:300.79999999999995px;font-size:10.500px;letter-spacing:.55px;color:#111;">墙竖向分布筋级别</div>
<div class="se" style="left:380px;top:301px">HRB400</div>
<div class="t" style="left:261px;top:320.5px;font-size:10.500px;letter-spacing:.55px;color:#111;">柱铝合金构件材料</div>
<div class="se" style="left:380px;top:322px">6061-T4</div>
<div class="t" style="left:261px;top:340.5px;font-size:10.500px;letter-spacing:.55px;color:#111;">梁铝合金构件材料</div>
<div class="se" style="left:380px;top:342px">6061-T4</div>
<div class="t" style="left:261px;top:361.5px;font-size:10.500px;letter-spacing:.55px;color:#111;">墙铝合金构件材料</div>
<div class="se" style="left:380px;top:363px">6061-T4</div>
<div class="t" style="left:261px;top:381px;font-size:10.500px;letter-spacing:.55px;color:#111;">支撑铝合金构件材料</div>
<div class="se" style="left:380px;top:382px">6061-T4</div>
<div class="t" style="left:261px;top:402px;font-size:10.500px;letter-spacing:.55px;color:#111;">其它铝合金构件材料</div>
<div class="se" style="left:380px;top:403px">6061-T4</div>
<div class="abs" style="left:148px;top:278px;width:108px;height:83px;border:2px dashed #e81123"></div>
<div class="abs" style="left:171px;top:473px;width:64px;height:16px;background:#e1e1e1;border:1px solid #adadad"></div>
<div class="t c" style="left:203px;top:473px;font-size:10.500px;letter-spacing:.5px;color:#111">确定<span style="font-family:'Liberation Mono',monospace;font-size:9px;letter-spacing:0">(Y)</span></div>
<div class="abs" style="left:304px;top:473px;width:65px;height:16px;background:#e1e1e1;border:1.500px solid #0078d7"></div>
<div class="t c" style="left:336.5px;top:473px;font-size:10.500px;letter-spacing:.5px;color:#111">取消<span style="font-family:'Liberation Mono',monospace;font-size:9px;letter-spacing:0">(C)</span></div>
</div>
<div class="t c" style="left:1135px;top:898px;letter-spacing:.4px;font-family:'Liberation Sans',sans-serif;font-size:18px;line-height:22px;height:22px;color:#cfcfcf">当前视图：体系0_2层（楼层三维图）</div>
<div class="t c" style="left:1131.500px;top:921px;font-family:'Liberation Sans',sans-serif;font-size:18px;line-height:22px;height:22px;color:#cfcfcf">当前楼层：体系0_2层(标准层2)_H=5.000m</div>
<div class="abs" style="left:345px;top:951.500px;width:1575px;height:2.500px;background:#39414e"></div>
<div id="cmd">
<div class="abs" style="left:0;top:1px;width:25px;height:57px;background:#2a303b"></div>
<div class="abs" style="left:4px;top:5px;width:17px;height:5px;background:repeating-linear-gradient(90deg,#e8e8e8 0 2px,transparent 2px 3px);-webkit-mask:linear-gradient(#000 0 2px,transparent 2px 3px,#000 3px 5px)"></div>
<svg style="left:7px;top:17px" width="9" height="9" viewBox="0 0 9 9"><path d="M1 1 L8 8 M8 1 L1 8" stroke="#f0f0f0" stroke-width="1.600"/></svg>
<svg style="left:4px;top:38px" width="15" height="15" viewBox="0 0 15 15"><path d="M1.500 13.500 L8.500 6.500" stroke="#f0f0f0" stroke-width="2.600" stroke-linecap="round"/><path d="M8 2 C10 0 13 0 14.500 1.500 L11.500 4 L12 6 L14.800 5 C15 7.500 12.500 9.500 10 8.500 C8 7.500 7 4.500 8 2 Z" fill="#f0f0f0"/></svg>
<div class="abs" style="left:25px;top:1px;width:1550px;height:36px;background:#c9c9c9"></div>
<div class="t" style="left:28px;top:4px;font-size:13px;color:#111;font-family:'Liberation Mono',monospace">导出完成！</div>
<div class="t" style="left:28px;top:19px;font-size:11.700px;color:#111;font-family:'Liberation Mono',monospace"><span style="font-size:13px">命令</span>: CmdFloorInformation CMDFLOORINFORMATIONMASTER</div>
<div class="abs" style="left:25px;top:38px;width:1550px;height:19px;background:#fff"></div>
<div class="abs" style="left:29px;top:41px;width:17px;height:13px;border:1px solid #444;border-top-width:2px;background:#f4f4f4"></div>
<svg style="left:31px;top:45px" width="12" height="7" viewBox="0 0 12 7"><path d="M1 1 L4 3.500 L1 6 M5.500 6 H10" fill="none" stroke="#333" stroke-width="1"/></svg>
<div class="abs" style="left:47.500px;top:46px;border:3.500px solid transparent;border-top:4px solid #444;border-bottom:0"></div>
<div class="t" style="left:56px;top:40px;font-size:11.700px;color:#111;font-family:'Liberation Mono',monospace">CmdFloorInformation</div>
</div>
<div id="status">
<svg style="left:0;top:0" width="200" height="18" viewBox="0 0 200 18"><path d="M60 0 C64 2 64 16 70 16 H104 C110 16 108 2 114 0 Z" fill="#2c3440"/><path d="M112 0 C116 2 116 16 122 16 H158 C164 16 162 2 168 0 Z" fill="#2c3440"/><path d="M170 1 H188 C193 1 192 6 190 10 C188 14 186 16 182 16 H180 C174 16 174 4 170 1 Z" fill="#2c3440"/><path d="M6 0 C12 2 12 17 19 17 H51 C58 17 56 2 62 0 Z" fill="#3b4453"/></svg>
<div class="t" style="left:23px;top:1px;color:#fff;font-weight:bold">模型</div>
<div class="t" style="left:69px;top:1px;color:#c5cad2">布局1</div>
<div class="t" style="left:123px;top:1px;color:#c5cad2">布局2</div>
<svg style="left:178px;top:5px" width="8" height="8" viewBox="0 0 8 8"><path d="M4 0 V8 M0 4 H8" stroke="#c5cad2" stroke-width="1.500"/></svg>
<div class="abs" style="left:525px;top:1px;width:1395px;height:25px;background:#3b4453"></div>
<div class="t" style="left:540px;top:5px;font-size:13px;letter-spacing:-.64px;color:#ececec">-318039.1378, 132128.8319, 0.0000</div>
<svg style="left:735px;top:4px" width="24" height="18" viewBox="0 0 24 18"><path d="M5 0 H24 L19 18 H0 Z" fill="#c3cbef"/><text x="12" y="14.500" font-size="13" font-style="italic" font-weight="bold" text-anchor="middle" fill="#2b3fc0" font-family="Liberation Sans">板</text></svg>
<div class="abs" style="left:759px;top:2px;width:24px;height:23px;background:#4b5361;border:1px solid #707886;background-image:linear-gradient(#707886 1px,transparent 1px),linear-gradient(90deg,#707886 1px,transparent 1px);background-size:6px 6px"></div>
<svg style="left:767px;top:5px" width="12" height="17" viewBox="0 0 12 17"><path d="M1 0 L11 10 H6.500 L9 16 L6.500 17 L4 11 L1 14 Z" fill="#a8adb6"/></svg>
<div class="abs" style="left:786px;top:3px;width:18px;height:20px;background:#c9c9c9;border:1px solid #e4e4e4"></div><div class="abs" style="left:789px;top:6px;width:12px;height:8px;background:#8d949e;border:1px solid #f4f4f4"></div>
<svg style="left:808.0px;top:3.0px" width="22" height="20" viewBox="0 0 22 20"><circle cx="11" cy="4" r="3" fill="#8f96a2"/><circle cx="3" cy="16" r="3" fill="#8f96a2"/><circle cx="19" cy="16" r="3" fill="#8f96a2"/><path d="M11 4 V11 L3 16 M11 11 L19 16" stroke="#8f96a2" stroke-width="2" fill="none"/></svg>
<div class="abs" style="left:831px;top:1px;width:3px;height:25px;background:#272e39"></div>
<div class="t" style="left:837px;top:5px;color:#fff">模型</div>
<div class="abs" style="left:864px;top:1px;width:3px;height:25px;background:#272e39"></div>
<svg style="left:870.5px;top:5.5px" width="15" height="15" viewBox="0 0 15 15"><path d="M4.500 0 V15 M10.500 0 V15 M0 4.500 H15 M0 10.500 H15" stroke="#e6e8ec" stroke-width="1.400"/></svg>
<svg style="left:896.0px;top:6.0px" width="14" height="14" viewBox="0 0 14 14"><g fill="#e6e8ec"><rect x="0" y="0" width="2" height="2"/><rect x="6" y="0" width="2" height="2"/><rect x="12" y="0" width="2" height="2"/><rect x="0" y="6" width="2" height="2"/><rect x="6" y="6" width="2" height="2"/><rect x="12" y="6" width="2" height="2"/><rect x="0" y="12" width="2" height="2"/><rect x="6" y="12" width="2" height="2"/><rect x="12" y="12" width="2" height="2"/></g></svg>
<div class="abs" style="left:919px;top:11px;border:4px solid transparent;border-top:4px solid #d8dbe0;border-bottom:0"></div>
<div class="abs" style="left:931px;top:1px;width:3px;height:25px;background:#272e39"></div>
<svg style="left:937.0px;top:5.0px" width="16" height="16" viewBox="0 0 16 16"><path d="M7 1 H15 V7 H7 Z" fill="none" stroke="#e6e8ec" stroke-width="1.400"/><rect x="0" y="9" width="7" height="7" fill="#e6e8ec"/></svg>
<div class="abs" style="left:957px;top:1px;width:3px;height:25px;background:#272e39"></div>
<svg style="left:961.5px;top:6.0px" width="17" height="14" viewBox="0 0 17 14"><path d="M4 0 V8 M0 4 H8" stroke="#e6e8ec" stroke-width="1.400"/><rect x="7" y="9" width="10" height="4" fill="#e6e8ec"/></svg>
<div class="abs" style="left:981px;top:1px;width:3px;height:25px;background:#272e39"></div>
<svg style="left:987.5px;top:5.0px" width="15" height="16" viewBox="0 0 15 16"><path d="M1 0 V15 H15 M1 9 H7 V15" fill="none" stroke="#e6e8ec" stroke-width="1.500"/></svg>
<svg style="left:1011.0px;top:5.0px" width="16" height="16" viewBox="0 0 16 16"><circle cx="7.500" cy="8.500" r="6" fill="none" stroke="#e6e8ec" stroke-width="1.400"/><path d="M7.500 8.500 L14 2" stroke="#e6e8ec" stroke-width="1.400"/><path d="M11 1 H15 V5" fill="none" stroke="#e6e8ec" stroke-width="1.200"/></svg>
<div class="abs" style="left:1036px;top:11px;border:4px solid transparent;border-top:4px solid #d8dbe0;border-bottom:0"></div>
<svg style="left:1054.0px;top:4.5px" width="12" height="17" viewBox="0 0 12 17"><path d="M6 0 V17" stroke="#4fc06a" stroke-width="1.400"/><path d="M0 3 L12 14" stroke="#e8483c" stroke-width="1.400"/><path d="M2 12 L10 5" stroke="#d8dbe0" stroke-width="1"/></svg>
<div class="abs" style="left:1076px;top:11px;border:4px solid transparent;border-top:4px solid #d8dbe0;border-bottom:0"></div>
<div class="abs" style="left:1090px;top:2px;width:22px;height:22px;background:#578bcd"></div>
<div class="abs" style="left:1113px;top:2px;width:23px;height:22px;background:#578bcd"></div>
<svg style="left:1093.0px;top:5.5px" width="16" height="15" viewBox="0 0 16 15"><path d="M1 14 H15 M1 14 L13 2" fill="none" stroke="#fff" stroke-width="1.600"/><path d="M6 14 C6 12 5 10.500 4 10" fill="none" stroke="#fff" stroke-width="1.200"/></svg>
<svg style="left:1116.5px;top:5.0px" width="16" height="16" viewBox="0 0 16 16"><rect x="2.500" y="3.500" width="11" height="11" fill="none" stroke="#fff" stroke-width="1.400"/><rect x="0" y="1" width="5" height="5" fill="#578bcd" stroke="#fff" stroke-width="1.200"/></svg>
<div class="abs" style="left:1141px;top:11px;border:4px solid transparent;border-top:4px solid #d8dbe0;border-bottom:0"></div>
<div class="abs" style="left:1152px;top:1px;width:3px;height:25px;background:#272e39"></div>
<svg style="left:1157.5px;top:6.0px" width="17" height="14" viewBox="0 0 17 14"><path d="M0 1.500 H17 M0 7 H10 M0 12.500 H14" stroke="#e6e8ec" stroke-width="2"/><path d="M12 7 H17" stroke="#e6e8ec" stroke-width="1"/></svg>
<div class="abs" style="left:1177px;top:1px;width:3px;height:25px;background:#272e39"></div>
<svg style="left:1183.5px;top:4.5px" width="17" height="17" viewBox="0 0 17 17"><path d="M3 0 V6 M0 3 H6" stroke="#e6e8ec" stroke-width="1.300"/><rect x="5" y="6" width="11" height="10" fill="#58c08a" stroke="#e6e8ec" stroke-width="1"/></svg>
<div class="abs" style="left:1205px;top:2px;width:23px;height:22px;background:#578bcd"></div>
<svg style="left:1207.5px;top:5.0px" width="18" height="16" viewBox="0 0 18 16"><path d="M1 5 H12 V15 H1 Z M1 5 L6 1 H17 L12 5 M17 1 V11 L12 15" fill="none" stroke="#fff" stroke-width="1.400"/></svg>
<div class="abs" style="left:1232px;top:11px;border:4px solid transparent;border-top:4px solid #d8dbe0;border-bottom:0"></div>
<div class="abs" style="left:1245px;top:1px;width:3px;height:25px;background:#272e39"></div>
<svg style="left:1249.0px;top:4.5px" width="18" height="17" viewBox="0 0 18 17"><path d="M3 17 V4 M0 7 L3 3 L6 7 M3 14 H16 M12 11 L16 14 L12 17" fill="none" stroke="#e6e8ec" stroke-width="1.400"/></svg>
<svg style="left:1274.0px;top:5.0px" width="18" height="16" viewBox="0 0 18 16"><path d="M1 5 H12 V15 H1 Z M1 5 L6 1 H17 L12 5 M17 1 V11 L12 15" fill="none" stroke="#e6e8ec" stroke-width="1.200" stroke-dasharray="3 1.500"/><rect x="0" y="4" width="2.500" height="2.500" fill="#6fb3f5"/><rect x="11" y="13.500" width="2.500" height="2.500" fill="#6fb3f5"/></svg>
<div class="abs" style="left:1299px;top:11px;border:4px solid transparent;border-top:4px solid #d8dbe0;border-bottom:0"></div>
<div class="abs" style="left:1311px;top:2px;width:24px;height:22px;background:#578bcd"></div>
<svg style="left:1314.0px;top:4.0px" width="18" height="18" viewBox="0 0 18 18"><path d="M9 1 L16 5 V13 L9 17 L2 13 V5 Z M9 1 V9 M9 9 L2 13 M9 9 L16 13" fill="none" stroke="#fff" stroke-width="1.400"/></svg>
<div class="abs" style="left:1340px;top:11px;border:4px solid transparent;border-top:4px solid #d8dbe0;border-bottom:0"></div>
<div class="abs" style="left:1350px;top:1px;width:3px;height:25px;background:#272e39"></div>
<div class="abs" style="left:1356px;top:2px;width:21px;height:22px;background:#578bcd"></div>
<div class="abs" style="left:1379px;top:2px;width:22px;height:22px;background:#578bcd"></div>
<svg style="left:1356.0px;top:4.5px" width="18" height="17" viewBox="0 0 18 17"><path d="M7 0 L13 16 L7 11 L1 16 Z" fill="#fff"/><circle cx="14.500" cy="4" r="2" fill="none" stroke="#fff" stroke-width="1"/></svg>
<svg style="left:1380.0px;top:4.5px" width="18" height="17" viewBox="0 0 18 17"><path d="M7 0 L13 16 L7 11 L1 16 Z" fill="#fff"/><path d="M15 1 L12 5 H15 L12.500 9" fill="none" stroke="#fff" stroke-width="1.100"/></svg>
<svg style="left:1406.0px;top:4.5px" width="14" height="17" viewBox="0 0 14 17"><path d="M7 0 L13 16 L7 11 L1 16 Z" fill="#e6e8ec"/></svg>
<div class="t" style="left:1431px;top:5px;color:#ececec;letter-spacing:-.45px">1:1 / 100%</div>
<div class="abs" style="left:1488px;top:11px;border:4px solid transparent;border-top:4px solid #d8dbe0;border-bottom:0"></div>
<div class="abs" style="left:1500px;top:1px;width:3px;height:25px;background:#272e39"></div>
<svg style="left:1506px;top:5px" width="16" height="16" viewBox="0 0 16 16"><g fill="#e6e8ec"><circle cx="8" cy="8" r="5.300"/><rect x="6.600" y="0" width="2.800" height="16" rx=".6"/><rect x="6.600" y="0" width="2.800" height="16" rx=".6" transform="rotate(45 8 8)"/><rect x="6.600" y="0" width="2.800" height="16" rx=".6" transform="rotate(90 8 8)"/><rect x="6.600" y="0" width="2.800" height="16" rx=".6" transform="rotate(135 8 8)"/></g><circle cx="8" cy="8" r="2.300" fill="#3b4453"/></svg>
<div class="abs" style="left:1531px;top:11px;border:4px solid transparent;border-top:4px solid #d8dbe0;border-bottom:0"></div>
<div class="abs" style="left:1542px;top:1px;width:3px;height:25px;background:#272e39"></div>
<svg style="left:1547.5px;top:5.0px" width="16" height="16" viewBox="0 0 16 16"><path d="M8 0 V16 M0 8 H16" stroke="#e6e8ec" stroke-width="1.600"/></svg>
<div class="abs" style="left:1568px;top:1px;width:3px;height:25px;background:#272e39"></div>
<svg style="left:1578.0px;top:4.5px" width="9" height="17" viewBox="0 0 9 17"><rect x="3" y="0" width="6" height="17" fill="#e6e8ec"/><path d="M0 2 H4 M0 6 H4 M0 10 H4 M0 14 H4" stroke="#3b4453" stroke-width="1.200"/><path d="M0 2 H3 M0 6 H3 M0 10 H3 M0 14 H3" stroke="#e6e8ec" stroke-width="1.200"/></svg>
<div class="t" style="left:1600px;top:5px;color:#ececec">小数</div>
<div class="abs" style="left:1655px;top:11px;border:4px solid transparent;border-top:4px solid #d8dbe0;border-bottom:0"></div>
<div class="abs" style="left:1667px;top:1px;width:3px;height:25px;background:#272e39"></div>
<svg style="left:1674.5px;top:5.0px" width="13" height="16" viewBox="0 0 13 16"><rect x=".7" y=".7" width="11.600" height="14.600" fill="none" stroke="#e6e8ec" stroke-width="1.400"/><path d="M3 5 H10 M3 8 H10 M3 11 H10" stroke="#e6e8ec" stroke-width="1.200" stroke-dasharray="1.500 1 6 0"/></svg>
<div class="abs" style="left:1692px;top:1px;width:3px;height:25px;background:#272e39"></div>
<svg style="left:1699.0px;top:5.0px" width="18" height="16" viewBox="0 0 18 16"><rect x=".7" y=".7" width="13" height="11" fill="none" stroke="#e6e8ec" stroke-width="1.400"/><rect x="10" y="9" width="7" height="6" fill="#3b4453" stroke="#e6e8ec" stroke-width="1.200"/><path d="M11.500 9 V7 C11.500 5 15.500 5 15.500 7 V9" fill="none" stroke="#e6e8ec" stroke-width="1"/></svg>
<div class="abs" style="left:1724px;top:11px;border:4px solid transparent;border-top:4px solid #d8dbe0;border-bottom:0"></div>
<svg style="left:1740.0px;top:4.5px" width="18" height="17" viewBox="0 0 18 17"><rect x="1" y="1" width="6" height="6" fill="none" stroke="#e6e8ec" stroke-width="1.300"/><circle cx="14" cy="7" r="3.200" fill="none" stroke="#e6e8ec" stroke-width="1.300"/><path d="M2 16 L5 10 L8 16 Z" fill="none" stroke="#e6e8ec" stroke-width="1.300"/></svg>
<div class="abs" style="left:1765px;top:2px;width:23px;height:22px;background:#578bcd"></div>
<svg style="left:1767.5px;top:4.0px" width="18" height="18" viewBox="0 0 18 18"><circle cx="9" cy="9" r="7.500" fill="#7b8594" stroke="#9aa3b0" stroke-width="1"/><path d="M6 13 L13 5" stroke="#aeb6c2" stroke-width="1.200"/></svg>
<svg style="left:1791.0px;top:4.0px" width="18" height="18" viewBox="0 0 18 18"><rect x="1" y="6" width="9" height="8" fill="#f0b040"/><rect x="3" y="2" width="5" height="5" fill="#5aa0e8"/><path d="M9 12 L12 16 L17 9" fill="none" stroke="#3cb043" stroke-width="2.200"/><path d="M1 6 V1 M1 14 V17" stroke="#5aa0e8" stroke-width="1"/></svg>
<svg style="left:1815.0px;top:4.5px" width="19" height="17" viewBox="0 0 19 17"><rect x="0" y="1" width="16" height="12" fill="#8f96a2"/><path d="M1 10 L5 5 L8 9 L11 4 L15 10" fill="none" stroke="#d8dce2" stroke-width="1"/><path d="M13 8 L18 17 H8 Z" fill="#f08030"/></svg>
<svg style="left:1842.0px;top:4.5px" width="18" height="17" viewBox="0 0 18 17"><path d="M5 8 H17 V16 H5 Z M5 8 L9 5 H14 L17 8" fill="none" stroke="#e8a070" stroke-width="1.300"/><path d="M2 2 C2 0 6 0 6 2 V8 C6 10 2 10 2 8 Z" fill="none" stroke="#e8a070" stroke-width="1.300"/></svg>
<div class="abs" style="left:1865px;top:1px;width:3px;height:25px;background:#272e39"></div>
<svg style="left:1873.5px;top:6.5px" width="16" height="13" viewBox="0 0 16 13"><rect x=".7" y=".7" width="14.600" height="11.600" fill="none" stroke="#e6e8ec" stroke-width="1.300"/><path d="M3 7 V10 H6 M10 3 H13 V6 M3 10 L6.500 6.500 M13 3 L9.500 6.500" fill="none" stroke="#e6e8ec" stroke-width="1.100"/></svg>
<svg style="left:1898.5px;top:6.5px" width="15" height="13" viewBox="0 0 15 13"><path d="M0 1.500 H15 M0 6.500 H15 M0 11.500 H15" stroke="#e6e8ec" stroke-width="2"/></svg>
</div>
</body>
</html>
